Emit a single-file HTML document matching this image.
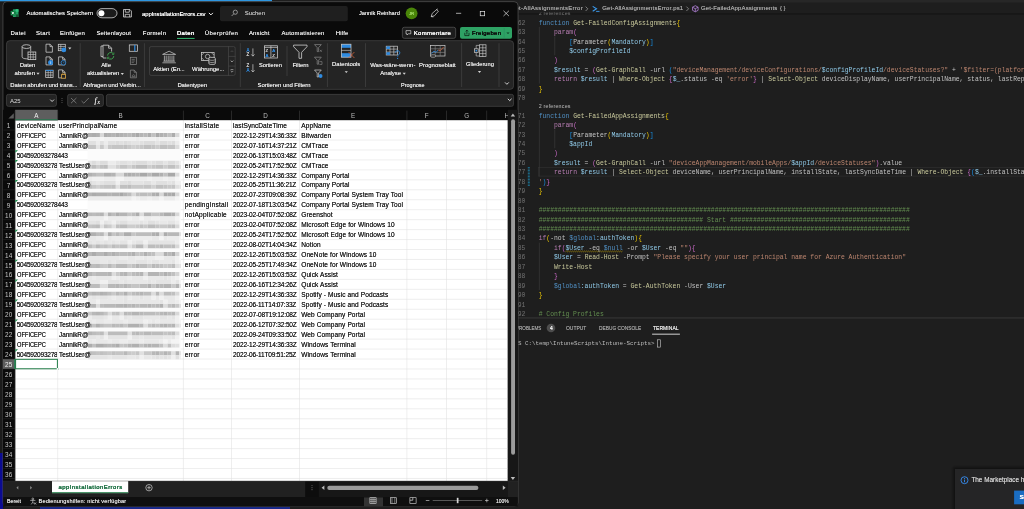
<!DOCTYPE html>
<html lang="de"><head><meta charset="utf-8"><title>appInstallationErrors.csv - Excel</title>
<style>
html,body{margin:0;padding:0}
body{width:1024px;height:509px;overflow:hidden;background:#1e1e1e;position:relative;font-family:"Liberation Sans",sans-serif}
.L{position:absolute;left:0;top:0;width:1024px;height:509px;overflow:hidden;will-change:transform}
.L>svg{position:absolute;left:0;top:0}
.t{position:absolute;white-space:pre;line-height:12px;height:12px;text-shadow:0 0 0.45px}
.m{font-family:"Liberation Mono",monospace;text-shadow:none;opacity:.9}
</style></head><body>
<div class="L" id="vscode">
<svg width="1024" height="509" viewBox="0 0 1024 509">
<rect x="0" y="0" width="1024" height="509" fill="#1e1e1e"/>
<rect x="630" y="0" width="394" height="2.6" fill="#272727"/>
<path d="M585.6 6.6 L587.8 8.8 L585.6 11" fill="none" stroke="#a3a3a3" stroke-width="0.7"/>
<svg x="591.5" y="5.2" width="9" height="7" viewBox="0 0 9 7" overflow="visible"><path d="M1.2 1.2 L5 3.6 L1.2 6" fill="none" stroke="#3b9cf0" stroke-width="1.1"/><path d="M4.6 6.2 H8" stroke="#3b9cf0" stroke-width="0.9"/></svg>
<path d="M686.4 6.6 L688.6 8.8 L686.4 11" fill="none" stroke="#a3a3a3" stroke-width="0.7"/>
<svg x="691.6" y="5" width="7.4" height="7.4" viewBox="0 0 7.4 7.4" overflow="visible"><path d="M3.7 0.7 L6.5 2.2 V5.3 L3.7 6.8 L0.9 5.3 V2.2 Z M0.9 2.2 L3.7 3.7 L6.5 2.2 M3.7 3.7 V6.8" fill="none" stroke="#b180d7" stroke-width="0.8"/></svg>
<rect x="518" y="13.4" width="506" height="0.8" fill="#101010" opacity="0.7"/>
<rect x="518" y="14.2" width="506" height="0.8" fill="#101010" opacity="0.3"/>
<rect x="538.5" y="167.46" width="489.4" height="8.6" stroke="#323232" stroke-width="0.6" fill="none"/>
<rect x="538.9" y="26.92" width="0.55" height="56.64" fill="#414141"/>
<rect x="554.6" y="36.36" width="0.55" height="18.88" fill="#414141"/>
<rect x="538.9" y="119.92" width="0.55" height="56.66" fill="#414141"/>
<rect x="554.6" y="129.37" width="0.55" height="18.88" fill="#414141"/>
<rect x="538.9" y="242.68" width="0.55" height="47.21" fill="#414141"/>
<rect x="527.8" y="167.16" width="2" height="0.75" fill="#1b81a8"/>
<rect x="527.8" y="168.66" width="2" height="0.75" fill="#1b81a8"/>
<rect x="527.8" y="170.16" width="2" height="0.75" fill="#1b81a8"/>
<rect x="527.8" y="171.66" width="2" height="0.75" fill="#1b81a8"/>
<rect x="527.8" y="173.16" width="2" height="0.75" fill="#1b81a8"/>
<rect x="527.8" y="174.66" width="2" height="0.75" fill="#1b81a8"/>
<rect x="527.8" y="176.16" width="2" height="0.75" fill="#1b81a8"/>
<rect x="527.8" y="177.66" width="2" height="0.75" fill="#1b81a8"/>
<rect x="527.8" y="179.16" width="2" height="0.75" fill="#1b81a8"/>
<rect x="527.8" y="180.66" width="2" height="0.75" fill="#1b81a8"/>
<rect x="527.8" y="182.16" width="2" height="0.75" fill="#1b81a8"/>
<rect x="527.8" y="183.66" width="2" height="0.75" fill="#1b81a8"/>
<rect x="527.8" y="185.16" width="2" height="0.75" fill="#1b81a8"/>
<path d="M565.50 251.80 L566.50 251.00 L567.50 251.80 L568.50 251.00 L569.50 251.80 L570.50 251.00 L571.50 251.80 L572.50 251.00 L573.50 251.80 L574.50 251.00 L575.50 251.80 L576.50 251.00 L577.50 251.80 L578.50 251.00 L579.50 251.80 L580.50 251.00 L581.50 251.80 L582.50 251.00 L583.50 251.80 L584.50 251.00 L585.50 251.80 L586.50 251.00 L587.50 251.80 L588.50 251.00 L589.50 251.80 L590.50 251.00 L591.50 251.80 L592.50 251.00 L593.50 251.80 L594.50 251.00 L595.50 251.80 L596.50 251.00 L597.50 251.80 L598.50 251.00 L599.50 251.80 L600.50 251.00 L601.50 251.80 L602.50 251.00 L603.50 251.80 L604.50 251.00 L605.50 251.80 L606.50 251.00 L607.50 251.80 L608.50 251.00 L609.50 251.80 L610.50 251.00 L611.50 251.80 L612.50 251.00 L613.50 251.80 L614.50 251.00 L615.50 251.80 L616.50 251.00 L617.50 251.80 L618.50 251.00 L619.50 251.80 L620.50 251.00 L621.50 251.80 L622.50 251.00" fill="none" stroke="#cca700" stroke-width="0.55"/>
<rect x="518" y="317.5" width="506" height="0.9" fill="#3a3a3a"/>
<rect x="546.7" y="323.7" width="8.6" height="8.6" fill="#4d4d4d" rx="4.3"/>
<rect x="652.1" y="333.7" width="27.8" height="0.9" fill="#e7e7e7"/>
<rect x="657.3" y="339.8" width="3.3" height="7.3" stroke="#cccccc" stroke-width="0.6" fill="none"/>
<rect x="951" y="465" width="84" height="54" fill="#000000" rx="5" opacity="0.06"/>
<rect x="952" y="466" width="83" height="53" fill="#000000" rx="4" opacity="0.08"/>
<rect x="953" y="467" width="82" height="52" fill="#000000" rx="3" opacity="0.1"/>
<rect x="954" y="468" width="81" height="51" fill="#000000" rx="2" opacity="0.14"/>
<rect x="955" y="469" width="80" height="50" fill="#252526"/>
<svg x="960.4" y="476.1" width="8.2" height="8.2" viewBox="0 0 8.2 8.2" overflow="visible"><circle cx="4.1" cy="4.1" r="3.5" fill="none" stroke="#3794ff" stroke-width="0.85"/><path d="M4.1 3.5V6.1" stroke="#3794ff" stroke-width="0.85"/><circle cx="4.1" cy="2.4" r="0.5" fill="#3794ff"/></svg>
<rect x="1014.1" y="490.6" width="14" height="13.7" fill="#1a6dc2"/>
</svg>
<span class="t" style="left:510.5px;top:2px;font-size:6px;color:#a3a3a3;letter-spacing:0.28px;">Get-AllAssignmentsError</span>
<span class="t" style="left:602.2px;top:2px;font-size:6px;color:#a3a3a3;letter-spacing:0.15px;">Get-AllAssignmentsError.ps1</span>
<span class="t" style="left:701px;top:2px;font-size:6px;color:#a3a3a3;letter-spacing:0.14px;">Get-FailedAppAssignments</span>
<span class="t" style="left:779.8px;top:2px;font-size:6px;color:#a3a3a3;transform:scaleX(0.95);transform-origin:0 50%;">{ }</span>
<span class="t" style="left:538.7px;top:7px;font-size:5.3px;color:#5d5d5d;letter-spacing:0.21px;clip-path:inset(5.6px 0 0 0);">2 references</span>
<span class="t m" style="left:505.3px;width:20px;text-align:right;top:18px;font-size:6.38px;color:#7b7b7b;text-shadow:none">62</span>
<span class="t m" style="left:538.7px;top:18px;font-size:6.38px"><span style="color:#569cd6">function</span><span style="color:#d4d4d4"> </span><span style="color:#dcdcaa">Get-FailedConfigAssignments</span><span style="color:#ffd700">{</span></span>
<span class="t m" style="left:505.3px;width:20px;text-align:right;top:27px;font-size:6.38px;color:#7b7b7b;text-shadow:none">63</span>
<span class="t m" style="left:538.7px;top:27px;font-size:6.38px"><span style="color:#d4d4d4">    </span><span style="color:#c586c0">param</span><span style="color:#da70d6">(</span></span>
<span class="t m" style="left:505.3px;width:20px;text-align:right;top:37px;font-size:6.38px;color:#7b7b7b;text-shadow:none">64</span>
<span class="t m" style="left:538.7px;top:37px;font-size:6.38px"><span style="color:#d4d4d4">        </span><span style="color:#179fff">[</span><span style="color:#d4d4d4">Parameter</span><span style="color:#ffd700">(</span><span style="color:#9cdcfe">Mandatory</span><span style="color:#ffd700">)</span><span style="color:#179fff">]</span></span>
<span class="t m" style="left:505.3px;width:20px;text-align:right;top:46px;font-size:6.38px;color:#7b7b7b;text-shadow:none">65</span>
<span class="t m" style="left:538.7px;top:46px;font-size:6.38px"><span style="color:#d4d4d4">        </span><span style="color:#9cdcfe">$configProfileId</span></span>
<span class="t m" style="left:505.3px;width:20px;text-align:right;top:55px;font-size:6.38px;color:#7b7b7b;text-shadow:none">66</span>
<span class="t m" style="left:538.7px;top:55px;font-size:6.38px"><span style="color:#d4d4d4">    </span><span style="color:#da70d6">)</span></span>
<span class="t m" style="left:505.3px;width:20px;text-align:right;top:65px;font-size:6.38px;color:#7b7b7b;text-shadow:none">67</span>
<span class="t m" style="left:538.7px;top:65px;font-size:6.38px"><span style="color:#d4d4d4">    </span><span style="color:#9cdcfe">$result</span><span style="color:#d4d4d4"> = </span><span style="color:#da70d6">(</span><span style="color:#dcdcaa">Get-GraphCall</span><span style="color:#d4d4d4"> -url </span><span style="color:#179fff">(</span><span style="color:#ce9178">"deviceManagement/deviceConfigurations/</span><span style="color:#9cdcfe">$configProfileId</span><span style="color:#ce9178">/deviceStatuses?"</span><span style="color:#d4d4d4"> + </span><span style="color:#ce9178">'$filter=(platform eq 'android') or (platform eq 'ios')</span></span>
<span class="t m" style="left:505.3px;width:20px;text-align:right;top:74px;font-size:6.38px;color:#7b7b7b;text-shadow:none">68</span>
<span class="t m" style="left:538.7px;top:74px;font-size:6.38px"><span style="color:#d4d4d4">    </span><span style="color:#c586c0">return</span><span style="color:#d4d4d4"> </span><span style="color:#9cdcfe">$result</span><span style="color:#d4d4d4"> | </span><span style="color:#dcdcaa">Where-Object</span><span style="color:#d4d4d4"> </span><span style="color:#da70d6">{</span><span style="color:#9cdcfe">$_</span><span style="color:#d4d4d4">.status -eq </span><span style="color:#ce9178">'error'</span><span style="color:#da70d6">}</span><span style="color:#d4d4d4"> | </span><span style="color:#dcdcaa">Select-Object</span><span style="color:#d4d4d4"> deviceDisplayName, userPrincipalName, status, lastReportedDateTime</span></span>
<span class="t m" style="left:505.3px;width:20px;text-align:right;top:84px;font-size:6.38px;color:#7b7b7b;text-shadow:none">69</span>
<span class="t m" style="left:538.7px;top:84px;font-size:6.38px"><span style="color:#ffd700">}</span></span>
<span class="t m" style="left:505.3px;width:20px;text-align:right;top:93px;font-size:6.38px;color:#7b7b7b;text-shadow:none">70</span>
<span class="t m" style="left:505.3px;width:20px;text-align:right;top:111px;font-size:6.38px;color:#7b7b7b;text-shadow:none">71</span>
<span class="t m" style="left:538.7px;top:111px;font-size:6.38px"><span style="color:#569cd6">function</span><span style="color:#d4d4d4"> </span><span style="color:#dcdcaa">Get-FailedAppAssignments</span><span style="color:#ffd700">{</span></span>
<span class="t m" style="left:505.3px;width:20px;text-align:right;top:120px;font-size:6.38px;color:#7b7b7b;text-shadow:none">72</span>
<span class="t m" style="left:538.7px;top:120px;font-size:6.38px"><span style="color:#d4d4d4">    </span><span style="color:#c586c0">param</span><span style="color:#da70d6">(</span></span>
<span class="t m" style="left:505.3px;width:20px;text-align:right;top:130px;font-size:6.38px;color:#7b7b7b;text-shadow:none">73</span>
<span class="t m" style="left:538.7px;top:130px;font-size:6.38px"><span style="color:#d4d4d4">        </span><span style="color:#179fff">[</span><span style="color:#d4d4d4">Parameter</span><span style="color:#ffd700">(</span><span style="color:#9cdcfe">Mandatory</span><span style="color:#ffd700">)</span><span style="color:#179fff">]</span></span>
<span class="t m" style="left:505.3px;width:20px;text-align:right;top:139px;font-size:6.38px;color:#7b7b7b;text-shadow:none">74</span>
<span class="t m" style="left:538.7px;top:139px;font-size:6.38px"><span style="color:#d4d4d4">        </span><span style="color:#9cdcfe">$appId</span></span>
<span class="t m" style="left:505.3px;width:20px;text-align:right;top:148px;font-size:6.38px;color:#7b7b7b;text-shadow:none">75</span>
<span class="t m" style="left:538.7px;top:148px;font-size:6.38px"><span style="color:#d4d4d4">    </span><span style="color:#da70d6">)</span></span>
<span class="t m" style="left:505.3px;width:20px;text-align:right;top:158px;font-size:6.38px;color:#7b7b7b;text-shadow:none">76</span>
<span class="t m" style="left:538.7px;top:158px;font-size:6.38px"><span style="color:#d4d4d4">    </span><span style="color:#9cdcfe">$result</span><span style="color:#d4d4d4"> = </span><span style="color:#da70d6">(</span><span style="color:#dcdcaa">Get-GraphCall</span><span style="color:#d4d4d4"> -url </span><span style="color:#ce9178">"deviceAppManagement/mobileApps/</span><span style="color:#9cdcfe">$appId</span><span style="color:#ce9178">/deviceStatuses"</span><span style="color:#da70d6">)</span><span style="color:#d4d4d4">.value</span></span>
<span class="t m" style="left:505.3px;width:20px;text-align:right;top:167px;font-size:6.38px;color:#7b7b7b;text-shadow:none">77</span>
<span class="t m" style="left:538.7px;top:167px;font-size:6.38px"><span style="color:#d4d4d4">    </span><span style="color:#c586c0">return</span><span style="color:#d4d4d4"> </span><span style="color:#9cdcfe">$result</span><span style="color:#d4d4d4"> | </span><span style="color:#dcdcaa">Select-Object</span><span style="color:#d4d4d4"> deviceName, userPrincipalName, installState, lastSyncDateTime | </span><span style="color:#dcdcaa">Where-Object</span><span style="color:#d4d4d4"> </span><span style="color:#da70d6">{</span><span style="color:#179fff">(</span><span style="color:#9cdcfe">$_</span><span style="color:#d4d4d4">.installState -ne </span><span style="color:#ce9178">'installed</span></span>
<span class="t m" style="left:505.3px;width:20px;text-align:right;top:177px;font-size:6.38px;color:#7b7b7b;text-shadow:none">78</span>
<span class="t m" style="left:538.7px;top:177px;font-size:6.38px"><span style="color:#ce9178">'</span><span style="color:#179fff">)</span><span style="color:#da70d6">}</span></span>
<span class="t m" style="left:505.3px;width:20px;text-align:right;top:186px;font-size:6.38px;color:#7b7b7b;text-shadow:none">79</span>
<span class="t m" style="left:538.7px;top:186px;font-size:6.38px"><span style="color:#ffd700">}</span></span>
<span class="t m" style="left:505.3px;width:20px;text-align:right;top:196px;font-size:6.38px;color:#7b7b7b;text-shadow:none">80</span>
<span class="t m" style="left:505.3px;width:20px;text-align:right;top:205px;font-size:6.38px;color:#7b7b7b;text-shadow:none">81</span>
<span class="t m" style="left:538.7px;top:205px;font-size:6.38px"><span style="color:#6a9955">#################################################################################################</span></span>
<span class="t m" style="left:505.3px;width:20px;text-align:right;top:215px;font-size:6.38px;color:#7b7b7b;text-shadow:none">82</span>
<span class="t m" style="left:538.7px;top:215px;font-size:6.38px"><span style="color:#6a9955">########################################### Start ###############################################</span></span>
<span class="t m" style="left:505.3px;width:20px;text-align:right;top:224px;font-size:6.38px;color:#7b7b7b;text-shadow:none">83</span>
<span class="t m" style="left:538.7px;top:224px;font-size:6.38px"><span style="color:#6a9955">#################################################################################################</span></span>
<span class="t m" style="left:505.3px;width:20px;text-align:right;top:233px;font-size:6.38px;color:#7b7b7b;text-shadow:none">84</span>
<span class="t m" style="left:538.7px;top:233px;font-size:6.38px"><span style="color:#c586c0">if</span><span style="color:#ffd700">(</span><span style="color:#d4d4d4">-not </span><span style="color:#569cd6">$global</span><span style="color:#9cdcfe">:authToken</span><span style="color:#ffd700">)</span><span style="color:#ffd700">{</span></span>
<span class="t m" style="left:505.3px;width:20px;text-align:right;top:243px;font-size:6.38px;color:#7b7b7b;text-shadow:none">85</span>
<span class="t m" style="left:538.7px;top:243px;font-size:6.38px"><span style="color:#d4d4d4">    </span><span style="color:#c586c0">if</span><span style="color:#da70d6">(</span><span style="color:#9cdcfe">$User</span><span style="color:#d4d4d4"> -eq </span><span style="color:#569cd6">$null</span><span style="color:#d4d4d4"> -or </span><span style="color:#9cdcfe">$User</span><span style="color:#d4d4d4"> -eq </span><span style="color:#ce9178">""</span><span style="color:#da70d6">)</span><span style="color:#da70d6">{</span></span>
<span class="t m" style="left:505.3px;width:20px;text-align:right;top:252px;font-size:6.38px;color:#7b7b7b;text-shadow:none">86</span>
<span class="t m" style="left:538.7px;top:252px;font-size:6.38px"><span style="color:#d4d4d4">    </span><span style="color:#9cdcfe">$User</span><span style="color:#d4d4d4"> = </span><span style="color:#dcdcaa">Read-Host</span><span style="color:#d4d4d4"> -Prompt </span><span style="color:#ce9178">"Please specify your user principal name for Azure Authentication"</span></span>
<span class="t m" style="left:505.3px;width:20px;text-align:right;top:262px;font-size:6.38px;color:#7b7b7b;text-shadow:none">87</span>
<span class="t m" style="left:538.7px;top:262px;font-size:6.38px"><span style="color:#d4d4d4">    </span><span style="color:#dcdcaa">Write-Host</span></span>
<span class="t m" style="left:505.3px;width:20px;text-align:right;top:271px;font-size:6.38px;color:#7b7b7b;text-shadow:none">88</span>
<span class="t m" style="left:538.7px;top:271px;font-size:6.38px"><span style="color:#d4d4d4">    </span><span style="color:#da70d6">}</span></span>
<span class="t m" style="left:505.3px;width:20px;text-align:right;top:281px;font-size:6.38px;color:#7b7b7b;text-shadow:none">89</span>
<span class="t m" style="left:538.7px;top:281px;font-size:6.38px"><span style="color:#d4d4d4">    </span><span style="color:#569cd6">$global</span><span style="color:#9cdcfe">:authToken</span><span style="color:#d4d4d4"> = </span><span style="color:#dcdcaa">Get-AuthToken</span><span style="color:#d4d4d4"> -User </span><span style="color:#9cdcfe">$User</span></span>
<span class="t m" style="left:505.3px;width:20px;text-align:right;top:290px;font-size:6.38px;color:#7b7b7b;text-shadow:none">90</span>
<span class="t m" style="left:538.7px;top:290px;font-size:6.38px"><span style="color:#ffd700">}</span></span>
<span class="t m" style="left:505.3px;width:20px;text-align:right;top:300px;font-size:6.38px;color:#7b7b7b;text-shadow:none">91</span>
<span class="t m" style="left:505.3px;width:20px;text-align:right;top:309px;font-size:6.38px;color:#7b7b7b;text-shadow:none">92</span>
<span class="t m" style="left:538.7px;top:309px;font-size:6.38px"><span style="color:#6a9955"># Config Profiles</span></span>
<span class="t" style="left:538.7px;top:100px;font-size:5.3px;color:#8f8f8f;letter-spacing:0.21px;">2 references</span>
<span class="t" style="left:515.66px;top:322px;font-size:5.45px;color:#9d9d9d;transform:scaleX(0.84);transform-origin:0 50%;">PROBLEMS</span>
<span class="t" style="left:549.6px;top:322px;font-size:5.3px;color:#ffffff;transform:scaleX(0.95);transform-origin:0 50%;">4</span>
<span class="t" style="left:566.3px;top:322px;font-size:5.45px;color:#9d9d9d;transform:scaleX(0.91);transform-origin:0 50%;">OUTPUT</span>
<span class="t" style="left:598.8px;top:322px;font-size:5.45px;color:#9d9d9d;transform:scaleX(0.89);transform-origin:0 50%;">DEBUG CONSOLE</span>
<span class="t" style="left:653.3px;top:322px;font-size:5.45px;color:#e7e7e7;transform:scaleX(0.93);transform-origin:0 50%;">TERMINAL</span>
<span class="t m" style="left:514.5px;top:338px;font-size:5.83px;color:#cccccc">PS C:\temp\IntuneScripts\Intune-Scripts&gt; </span>
<span class="t" style="left:971.4px;top:474px;font-size:6.4px;color:#cccccc;">The Marketplace has extensions that can help</span>
<span class="t" style="left:1019.4px;top:491px;font-size:6.2px;color:#ffffff;-webkit-text-stroke:0.22px;">Search Marketplace</span>
</div>
<div class="L" id="excel">
<svg width="1024" height="509" viewBox="0 0 1024 509">
<rect x="0" y="0" width="4" height="509" fill="#1b1b1b"/>
<rect x="0" y="0" width="272" height="1.3" fill="#2e97e2"/>
<rect x="40" y="506.4" width="250" height="3" fill="#18288a"/>
<rect x="0" y="453" width="3" height="56" fill="#0b0b92"/>
<rect x="2.95" y="1.65" width="515.1" height="504.9" stroke="#565656" stroke-width="0.7" fill="#0a0a0a" rx="4"/>
<svg x="10.3" y="8.8" width="8.6" height="8.6" viewBox="0 0 8.6 8.6" overflow="visible"><rect x="2.6" y="0.4" width="5.6" height="7.8" rx="0.6" fill="#21a366"/><rect x="5.4" y="0.4" width="2.8" height="2.6" fill="#33c481"/><rect x="5.4" y="5.6" width="2.8" height="2.6" fill="#185c37"/><rect x="2.6" y="3" width="2.8" height="2.6" fill="#107c41"/><rect x="0.3" y="2" width="4.6" height="4.6" rx="0.5" fill="#107c41"/><path d="M1.6 3.1 L3.6 5.5 M3.6 3.1 L1.6 5.5" stroke="#fff" stroke-width="0.8"/></svg>
<rect x="97" y="8.6" width="20" height="9.2" stroke="#d0d0d0" stroke-width="0.8" fill="#1b1b1b" rx="5"/>
<circle cx="101.4" cy="13.2" r="3.0" fill="#ffffff"/>
<svg x="123" y="9" width="9" height="8.6" viewBox="0 0 9 8.6" overflow="visible"><path d="M0.5 0.5 H6.9 L8.4 2 V8 H0.5 Z" fill="none" stroke="#d6d6d6" stroke-width="0.8"/><path d="M2.3 0.6 V3.2 H6.3 V0.6 M2.2 8 V5.3 H6.7 V8" fill="none" stroke="#d6d6d6" stroke-width="0.8"/></svg>
<path d="M208.9 12.9 L210.9 14.9 L212.9 12.9" fill="none" stroke="#f4f4f4" stroke-width="1.0"/>
<rect x="220" y="6" width="127.8" height="15.2" fill="#1f1f1f" rx="2"/>
<circle cx="235.3" cy="12.2" r="2.1" fill="none" stroke="#bdbdbd" stroke-width="0.7"/><path d="M233.8 13.8 L231.6 16" stroke="#bdbdbd" stroke-width="0.7"/>
<circle cx="411.6" cy="13.3" r="5.9" fill="#4a8509"/>
<path d="M431.2 16.6 L432.2 13.4 L436.6 9.6 L438.4 11.2 L434.4 15.8 Z M431.2 16.6 L433.4 16.9 M436.2 9.9 L437.8 8.9" fill="none" stroke="#dedede" stroke-width="0.7"/>
<path d="M456 13.3 H461.2" stroke="#e6e6e6" stroke-width="0.7"/>
<rect x="480.25" y="11.45" width="4.4" height="4.3" stroke="#e6e6e6" stroke-width="0.7" fill="none"/>
<path d="M503.5 10.8 L508.9 16 M508.9 10.8 L503.5 16" stroke="#e6e6e6" stroke-width="0.7"/>
<rect x="177" y="37.9" width="17.6" height="1.1" fill="#2fa866"/>
<rect x="402.35" y="27.25" width="53.3" height="11.1" stroke="#5a5a5a" stroke-width="0.7" fill="#1c1c1c" rx="2"/>
<path d="M406 30.6 H410.8 V33.8 H408.2 L407 35 V33.8 H406 Z" fill="none" stroke="#e0e0e0" stroke-width="0.65"/>
<rect x="460" y="26.9" width="52" height="11.8" fill="#2ea264" rx="2"/>
<path d="M464.8 32.8 V35.6 H469 V32.8 M466.9 34.4 V30.2 M465.6 31.4 L466.9 30.1 L468.2 31.4" fill="none" stroke="#0a0a0a" stroke-width="0.65"/>
<path d="M506.4 32.4 L508 34 L509.6 32.4 Z" fill="#103a25"/>
<line x1="504.2" y1="28" x2="504.2" y2="37.6" stroke="#25895a" stroke-width="0.5" />
<rect x="6.45" y="40.65" width="507.1" height="48.7" stroke="#474747" stroke-width="0.7" fill="#242424" rx="3.4"/>
<line x1="80.2" y1="43.2" x2="80.2" y2="87" stroke="#4a4a4a" stroke-width="0.6" />
<line x1="144.4" y1="43.2" x2="144.4" y2="87" stroke="#4a4a4a" stroke-width="0.6" />
<line x1="240.3" y1="43.2" x2="240.3" y2="87" stroke="#4a4a4a" stroke-width="0.6" />
<line x1="327.4" y1="43.2" x2="327.4" y2="87" stroke="#4a4a4a" stroke-width="0.6" />
<line x1="365.5" y1="43.2" x2="365.5" y2="87" stroke="#4a4a4a" stroke-width="0.6" />
<line x1="461.6" y1="43.2" x2="461.6" y2="87" stroke="#4a4a4a" stroke-width="0.6" />
<line x1="499" y1="43.2" x2="499" y2="87" stroke="#4a4a4a" stroke-width="0.6" />
<line x1="287" y1="46" x2="287" y2="76" stroke="#4a4a4a" stroke-width="0.6" />
<svg x="21.4" y="44.2" width="15" height="16.2" viewBox="0 0 15 16.2" overflow="visible"><ellipse cx="5" cy="2.4" rx="4.3" ry="1.9" fill="none" stroke="#d0d0d0" stroke-width="0.8"/><path d="M0.7 2.4 V12.6 C0.7 14 3 14.6 5 14.6 H6.4 M9.3 2.4 V7.2" fill="none" stroke="#d0d0d0" stroke-width="0.8"/><rect x="6.6" y="7.8" width="7.8" height="7.6" fill="#242424" stroke="#d0d0d0" stroke-width="0.8"/><path d="M6.6 10.3 H14.4 M6.6 12.8 H14.4 M9.2 7.8 V15.4 M11.8 7.8 V15.4" stroke="#d0d0d0" stroke-width="0.6"/></svg>
<path d="M36.4 72.8 L39.6 72.8 L38 74.72 Z" fill="#d4d4d4"/>
<svg x="45.4" y="43.7" width="8" height="9" viewBox="0 0 8 9" overflow="visible"><path d="M0.6 0.5 H4.6 L7 2.9 V8.5 H0.6 Z M4.6 0.5 V2.9 H7" fill="none" stroke="#d0d0d0" stroke-width="0.75"/></svg>
<svg x="45.4" y="56.4" width="8" height="9" viewBox="0 0 8 9" overflow="visible"><path d="M0.6 0.5 H4.6 L7 2.9 V8.5 H0.6 Z M4.6 0.5 V2.9 H7" fill="none" stroke="#d0d0d0" stroke-width="0.75"/><circle cx="5.2" cy="6.2" r="2.5" fill="#2f8be0"/><path d="M5.2 5 V7.6" stroke="#fff" stroke-width="0.5"/></svg>
<svg x="45.2" y="69.6" width="8.4" height="8.6" viewBox="0 0 8.4 8.6" overflow="visible"><rect x="0.5" y="0.6" width="7.4" height="7.4" fill="none" stroke="#d0d0d0" stroke-width="0.75"/><path d="M0.5 3 H7.9 M0.5 5.5 H7.9 M3 0.6 V8 M5.5 0.6 V8" stroke="#d0d0d0" stroke-width="0.6"/><path d="M0.5 1 H7.9" stroke="#2f8be0" stroke-width="1"/></svg>
<svg x="57.8" y="43.7" width="9" height="9" viewBox="0 0 9 9" overflow="visible"><rect x="0.5" y="0.6" width="7" height="6.4" fill="none" stroke="#d0d0d0" stroke-width="0.75"/><path d="M0.5 2.8 H7.5 M0.5 5 H7.5 M3 0.6 V7" stroke="#d0d0d0" stroke-width="0.6"/><circle cx="6" cy="6.2" r="2.4" fill="#2f8be0"/></svg>
<path d="M68.2 47.6 L71.4 47.6 L69.8 49.52 Z" fill="#d4d4d4"/>
<svg x="58" y="56.4" width="8" height="9" viewBox="0 0 8 9" overflow="visible"><path d="M0.6 0.5 H4.6 L7 2.9 V8.5 H0.6 Z M4.6 0.5 V2.9 H7" fill="none" stroke="#d0d0d0" stroke-width="0.75"/><circle cx="5.4" cy="6.3" r="2.3" fill="#242424" stroke="#2f8be0" stroke-width="0.8"/><path d="M5.4 5.2 V6.4 H6.4" fill="none" stroke="#2f8be0" stroke-width="0.5"/></svg>
<svg x="58" y="69.4" width="8" height="9" viewBox="0 0 8 9" overflow="visible"><path d="M0.6 0.5 H4.6 L7 2.9 V8.5 H0.6 Z M4.6 0.5 V2.9 H7" fill="none" stroke="#d0d0d0" stroke-width="0.75"/><rect x="3.4" y="5.2" width="4.2" height="3.6" fill="#242424" stroke="#d9a441" stroke-width="0.8"/><path d="M4.3 5.2 V4.3 C4.3 3.2 6.7 3.2 6.7 4.3 V5.2" fill="none" stroke="#d9a441" stroke-width="0.6"/></svg>
<svg x="100" y="44.6" width="15" height="15.6" viewBox="0 0 15 15.6" overflow="visible"><path d="M3 1.4 H1 V12 H3" fill="none" stroke="#d0d0d0" stroke-width="0.8"/><path d="M3 0.6 H8.6 L11.6 3.6 V7 M3 0.6 V13.4 H6.4 M8.6 0.6 V3.6 H11.6" fill="none" stroke="#d0d0d0" stroke-width="0.8"/><path d="M7.6 11 A3.2 3.2 0 0 1 13.4 9.2 M13.8 11.4 A3.2 3.2 0 0 1 8 13.2" fill="none" stroke="#3ea84f" stroke-width="0.9"/><path d="M13.9 7.8 V9.8 H12 M7.5 14.6 V12.6 H9.4" fill="none" stroke="#3ea84f" stroke-width="0.7"/></svg>
<path d="M120.7 73 L123.9 73 L122.3 74.92 Z" fill="#d4d4d4"/>
<svg x="128.8" y="44.4" width="9.2" height="7.6" viewBox="0 0 9.2 7.6" overflow="visible"><rect x="0.5" y="0.5" width="8.2" height="6.4" fill="none" stroke="#d0d0d0" stroke-width="0.75"/><path d="M6 0.5 V6.9" stroke="#2f8be0" stroke-width="1.2"/></svg>
<svg x="129.8" y="56.8" width="7.4" height="8.4" viewBox="0 0 7.4 8.4" overflow="visible"><rect x="0.5" y="0.5" width="6.2" height="7.2" fill="none" stroke="#8a8a8a" stroke-width="0.7"/><path d="M1.8 2.6 H5 M1.8 4.2 H5 M1.8 5.8 H4" stroke="#8a8a8a" stroke-width="0.6"/></svg>
<svg x="129.8" y="69.6" width="7.6" height="8.8" viewBox="0 0 7.6 8.8" overflow="visible"><path d="M0.6 0.5 H4.4 L6.6 2.7 V8.2 H0.6 Z M4.4 0.5 V2.7 H6.6" fill="none" stroke="#8a8a8a" stroke-width="0.7"/><path d="M2.4 6.6 C2.4 4.6 5 4.6 5 6.6 M2 7 H5.6" fill="none" stroke="#8a8a8a" stroke-width="0.6"/></svg>
<rect x="149.5" y="46.6" width="85.7" height="28.8" stroke="#4d4d4d" stroke-width="0.6" fill="none" rx="1.6"/>
<line x1="228.5" y1="46.3" x2="228.5" y2="75.7" stroke="#4d4d4d" stroke-width="0.6" />
<line x1="228.5" y1="56.4" x2="235.5" y2="56.4" stroke="#4d4d4d" stroke-width="0.6" />
<line x1="228.5" y1="66.1" x2="235.5" y2="66.1" stroke="#4d4d4d" stroke-width="0.6" />
<path d="M230.7 52 L232 50.7 L233.3 52" fill="none" stroke="#5a5a5a" stroke-width="0.6"/>
<path d="M230.7 60.6 L232 61.9 L233.3 60.6" fill="none" stroke="#d0d0d0" stroke-width="0.7"/>
<path d="M230.6 69.6 H233.4 M230.7 70.9 L232 72.2 L233.3 70.9" fill="none" stroke="#d0d0d0" stroke-width="0.6"/>
<svg x="161.8" y="50.6" width="14.6" height="12.8" viewBox="0 0 14.6 12.8" overflow="visible"><path d="M0.8 3.8 L7.3 0.6 L13.8 3.8 Z M0.6 12.2 H14 M1.6 10.6 H13 M2.6 5 V10.4 M4.4 5 V10.4 M6.4 5 V10.4 M8.2 5 V10.4 M10.2 5 V10.4 M12 5 V10.4" fill="none" stroke="#d0d0d0" stroke-width="0.7"/></svg>
<svg x="201" y="52" width="15" height="13" viewBox="0 0 15 13" overflow="visible"><rect x="0.5" y="0.5" width="12.6" height="8" fill="none" stroke="#d0d0d0" stroke-width="0.75"/><circle cx="6.6" cy="4.5" r="2.2" fill="none" stroke="#d0d0d0" stroke-width="0.7"/><path d="M0.5 2.6 C1.8 2.6 2.6 1.8 2.6 0.5 M13.1 2.6 C11.8 2.6 11 1.8 11 0.5 M0.5 6.4 C1.8 6.4 2.6 7.2 2.6 8.5" fill="none" stroke="#d0d0d0" stroke-width="0.6"/><rect x="7.8" y="5.4" width="6.6" height="7" rx="1.4" fill="#242424" stroke="#d0d0d0" stroke-width="0.75"/><path d="M7.8 7.6 C9.4 8.6 12.8 8.6 14.4 7.6 M7.8 9.8 C9.4 10.8 12.8 10.8 14.4 9.8" fill="none" stroke="#d0d0d0" stroke-width="0.6"/></svg>
<path d="M252.9 48.4 V56 M251.3 54.4 L252.9 56.2 L254.5 54.4" fill="none" stroke="#d0d0d0" stroke-width="0.7"/>
<path d="M252.9 64.2 V71.8 M251.3 70.2 L252.9 72 L254.5 70.2" fill="none" stroke="#d0d0d0" stroke-width="0.7"/>
<svg x="263.9" y="45" width="14.2" height="13.6" viewBox="0 0 14.2 13.6" overflow="visible"><rect x="0.5" y="0.8" width="13" height="12.2" fill="none" stroke="#d0d0d0" stroke-width="0.75"/><path d="M7 0.8 V13 M0.5 2.4 H13.5" stroke="#d0d0d0" stroke-width="0.7"/></svg>
<svg x="293" y="44.3" width="14.6" height="15" viewBox="0 0 14.6 15" overflow="visible"><path d="M0.6 0.8 H14 V2.4 L8.6 8 V14 H6 V8 L0.6 2.4 Z" fill="none" stroke="#d0d0d0" stroke-width="0.8"/></svg>
<svg x="314" y="44" width="9" height="9" viewBox="0 0 9 9" overflow="visible"><path d="M0.5 0.6 H7.3 L4.6 3.6 V7.6 H3.2 V3.6 Z" fill="none" stroke="#8a8a8a" stroke-width="0.7"/><path d="M5.8 5.8 L7.8 7.8 M7.8 5.8 L5.8 7.8" stroke="#8a8a8a" stroke-width="0.6"/></svg>
<svg x="314" y="56.6" width="9" height="9" viewBox="0 0 9 9" overflow="visible"><path d="M0.5 0.6 H7.3 L4.6 3.6 V7.6 H3.2 V3.6 Z" fill="none" stroke="#8a8a8a" stroke-width="0.7"/><path d="M5.4 5 H8 V7.8 H5.4" fill="none" stroke="#8a8a8a" stroke-width="0.6"/></svg>
<svg x="314" y="69.4" width="9" height="9" viewBox="0 0 9 9" overflow="visible"><path d="M0.5 0.6 H7.3 L4.6 3.6 V7.6 H3.2 V3.6 Z" fill="none" stroke="#d0d0d0" stroke-width="0.7"/><circle cx="6.6" cy="6.6" r="1.9" fill="#2f8be0"/></svg>
<svg x="341" y="43.6" width="14" height="15" viewBox="0 0 14 15" overflow="visible"><rect x="0.4" y="0.6" width="9.6" height="3.6" fill="#2f8be0"/><rect x="0.4" y="9.6" width="9.6" height="4" fill="#2f8be0"/><rect x="0.4" y="0.6" width="9.6" height="13" fill="none" stroke="#d0d0d0" stroke-width="0.7"/><path d="M0.4 6.8 H10" stroke="#d0d0d0" stroke-width="0.6"/><path d="M7.6 8.4 L13.4 14.4 M13.4 8.4 L7.6 14.4" stroke="#d0623a" stroke-width="0.8"/></svg>
<path d="M344.7 71.2 L347.9 71.2 L346.3 73.12 Z" fill="#d4d4d4"/>
<svg x="385.8" y="45.6" width="16" height="14" viewBox="0 0 16 14" overflow="visible"><rect x="0.4" y="0.6" width="11.4" height="8.8" fill="none" stroke="#d0d0d0" stroke-width="0.7"/><path d="M0.4 3.5 H11.8 M0.4 6.4 H11.8 M4.2 0.6 V9.4 M8 0.6 V9.4" stroke="#d0d0d0" stroke-width="0.6"/><rect x="0.6" y="0.8" width="3.5" height="2.6" fill="#2f8be0"/><rect x="0.6" y="6.6" width="3.5" height="2.7" fill="#2f8be0"/><path d="M9.6 7 C9.6 4.4 14 4.6 14 7.2 C14 9 11.8 9.2 11.8 11" fill="none" stroke="#2f8be0" stroke-width="0.9"/><circle cx="11.8" cy="12.8" r="0.6" fill="#2f8be0"/></svg>
<path d="M402.6 72.8 L405.8 72.8 L404.2 74.72 Z" fill="#d4d4d4"/>
<svg x="430" y="44.8" width="15.6" height="13" viewBox="0 0 15.6 13" overflow="visible"><rect x="0.4" y="0.6" width="14.6" height="10.6" fill="none" stroke="#d0d0d0" stroke-width="0.7"/><path d="M0.4 4 H15 M0.4 7.6 H15 M5.2 0.6 V11.2 M10.2 0.6 V11.2" stroke="#8a8a8a" stroke-width="0.6"/><path d="M1.4 8.8 L4 6.4 L6 7.6 L8.2 5.2" fill="none" stroke="#2f8be0" stroke-width="0.8"/><path d="M8.2 5.2 L10.4 5.8 L13.6 2.2" fill="none" stroke="#d0623a" stroke-width="0.8"/><rect x="0.8" y="10" width="4.6" height="2.4" rx="0.8" fill="#242424" stroke="#d0d0d0" stroke-width="0.6"/></svg>
<svg x="473.8" y="44.2" width="13" height="13" viewBox="0 0 13 13" overflow="visible"><rect x="5.8" y="0.6" width="6.4" height="11.8" fill="none" stroke="#d0d0d0" stroke-width="0.7"/><path d="M5.8 3.6 H12.2 M5.8 6.5 H12.2 M5.8 9.4 H12.2 M9 0.6 V12.4" stroke="#d0d0d0" stroke-width="0.6"/><path d="M5.6 1.2 H2.4 V4.6 M2.4 8.4 V11.8 H5.6" fill="none" stroke="#d0d0d0" stroke-width="0.6"/><rect x="0.6" y="4.6" width="3.8" height="3.8" fill="#242424" stroke="#d0d0d0" stroke-width="0.7"/><rect x="1.7" y="5.7" width="1.6" height="1.6" fill="#2f8be0"/></svg>
<path d="M477.9 71 L481.1 71 L479.5 72.92 Z" fill="#d4d4d4"/>
<path d="M505 82.4 L506.9 84.3 L508.8 82.4" fill="none" stroke="#e8e8e8" stroke-width="0.9"/>
<rect x="6.45" y="94.35" width="50" height="12" stroke="#474747" stroke-width="0.7" fill="#242424" rx="2"/>
<path d="M50.2 99.6 L52.1 101.5 L54 99.6" fill="none" stroke="#e8e8e8" stroke-width="0.9"/>
<circle cx="62" cy="98.4" r="0.45" fill="#bdbdbd"/>
<circle cx="62" cy="100.4" r="0.45" fill="#bdbdbd"/>
<circle cx="62" cy="102.4" r="0.45" fill="#bdbdbd"/>
<rect x="67.65" y="94.35" width="35.7" height="12" stroke="#474747" stroke-width="0.7" fill="#242424" rx="2"/>
<path d="M71 98 L76.4 103.2 M76.4 98 L71 103.2" stroke="#8c8c8c" stroke-width="0.7"/>
<path d="M81.6 101 L83.8 103.2 L88.8 98" fill="none" stroke="#8c8c8c" stroke-width="0.7"/>
<rect x="106.35" y="94.35" width="407.2" height="12" stroke="#474747" stroke-width="0.7" fill="#242424" rx="2"/>
<path d="M507.8 98.8 L509.7 100.7 L511.6 98.8" fill="none" stroke="#e8e8e8" stroke-width="0.9"/>
<rect x="15.1" y="120.1" width="492.7" height="361.1" fill="#ffffff"/>
<line x1="15.1" y1="130.06" x2="507.8" y2="130.06" stroke="#e0e0e0" stroke-width="0.55" />
<line x1="15.1" y1="140.01" x2="507.8" y2="140.01" stroke="#e0e0e0" stroke-width="0.55" />
<line x1="15.1" y1="149.97" x2="507.8" y2="149.97" stroke="#e0e0e0" stroke-width="0.55" />
<line x1="15.1" y1="159.92" x2="507.8" y2="159.92" stroke="#e0e0e0" stroke-width="0.55" />
<line x1="15.1" y1="169.88" x2="507.8" y2="169.88" stroke="#e0e0e0" stroke-width="0.55" />
<line x1="15.1" y1="179.83" x2="507.8" y2="179.83" stroke="#e0e0e0" stroke-width="0.55" />
<line x1="15.1" y1="189.78" x2="507.8" y2="189.78" stroke="#e0e0e0" stroke-width="0.55" />
<line x1="15.1" y1="199.74" x2="507.8" y2="199.74" stroke="#e0e0e0" stroke-width="0.55" />
<line x1="15.1" y1="209.69" x2="507.8" y2="209.69" stroke="#e0e0e0" stroke-width="0.55" />
<line x1="15.1" y1="219.65" x2="507.8" y2="219.65" stroke="#e0e0e0" stroke-width="0.55" />
<line x1="15.1" y1="229.6" x2="507.8" y2="229.6" stroke="#e0e0e0" stroke-width="0.55" />
<line x1="15.1" y1="239.56" x2="507.8" y2="239.56" stroke="#e0e0e0" stroke-width="0.55" />
<line x1="15.1" y1="249.51" x2="507.8" y2="249.51" stroke="#e0e0e0" stroke-width="0.55" />
<line x1="15.1" y1="259.47" x2="507.8" y2="259.47" stroke="#e0e0e0" stroke-width="0.55" />
<line x1="15.1" y1="269.42" x2="507.8" y2="269.42" stroke="#e0e0e0" stroke-width="0.55" />
<line x1="15.1" y1="279.38" x2="507.8" y2="279.38" stroke="#e0e0e0" stroke-width="0.55" />
<line x1="15.1" y1="289.34" x2="507.8" y2="289.34" stroke="#e0e0e0" stroke-width="0.55" />
<line x1="15.1" y1="299.29" x2="507.8" y2="299.29" stroke="#e0e0e0" stroke-width="0.55" />
<line x1="15.1" y1="309.25" x2="507.8" y2="309.25" stroke="#e0e0e0" stroke-width="0.55" />
<line x1="15.1" y1="319.2" x2="507.8" y2="319.2" stroke="#e0e0e0" stroke-width="0.55" />
<line x1="15.1" y1="329.15" x2="507.8" y2="329.15" stroke="#e0e0e0" stroke-width="0.55" />
<line x1="15.1" y1="339.11" x2="507.8" y2="339.11" stroke="#e0e0e0" stroke-width="0.55" />
<line x1="15.1" y1="349.06" x2="507.8" y2="349.06" stroke="#e0e0e0" stroke-width="0.55" />
<line x1="15.1" y1="359.02" x2="507.8" y2="359.02" stroke="#e0e0e0" stroke-width="0.55" />
<line x1="15.1" y1="368.98" x2="507.8" y2="368.98" stroke="#e0e0e0" stroke-width="0.55" />
<line x1="15.1" y1="378.93" x2="507.8" y2="378.93" stroke="#e0e0e0" stroke-width="0.55" />
<line x1="15.1" y1="388.88" x2="507.8" y2="388.88" stroke="#e0e0e0" stroke-width="0.55" />
<line x1="15.1" y1="398.84" x2="507.8" y2="398.84" stroke="#e0e0e0" stroke-width="0.55" />
<line x1="15.1" y1="408.79" x2="507.8" y2="408.79" stroke="#e0e0e0" stroke-width="0.55" />
<line x1="15.1" y1="418.75" x2="507.8" y2="418.75" stroke="#e0e0e0" stroke-width="0.55" />
<line x1="15.1" y1="428.71" x2="507.8" y2="428.71" stroke="#e0e0e0" stroke-width="0.55" />
<line x1="15.1" y1="438.66" x2="507.8" y2="438.66" stroke="#e0e0e0" stroke-width="0.55" />
<line x1="15.1" y1="448.62" x2="507.8" y2="448.62" stroke="#e0e0e0" stroke-width="0.55" />
<line x1="15.1" y1="458.57" x2="507.8" y2="458.57" stroke="#e0e0e0" stroke-width="0.55" />
<line x1="15.1" y1="468.52" x2="507.8" y2="468.52" stroke="#e0e0e0" stroke-width="0.55" />
<line x1="15.1" y1="478.48" x2="507.8" y2="478.48" stroke="#e0e0e0" stroke-width="0.55" />
<line x1="57.7" y1="120.1" x2="57.7" y2="481.2" stroke="#e0e0e0" stroke-width="0.55" />
<line x1="183.4" y1="120.1" x2="183.4" y2="481.2" stroke="#e0e0e0" stroke-width="0.55" />
<line x1="231.5" y1="120.1" x2="231.5" y2="481.2" stroke="#e0e0e0" stroke-width="0.55" />
<line x1="299.5" y1="120.1" x2="299.5" y2="481.2" stroke="#e0e0e0" stroke-width="0.55" />
<line x1="406.9" y1="120.1" x2="406.9" y2="481.2" stroke="#e0e0e0" stroke-width="0.55" />
<line x1="446.5" y1="120.1" x2="446.5" y2="481.2" stroke="#e0e0e0" stroke-width="0.55" />
<line x1="486.7" y1="120.1" x2="486.7" y2="481.2" stroke="#e0e0e0" stroke-width="0.55" />
<rect x="3" y="109.8" width="504.8" height="10.3" fill="#0a0a0a"/>
<rect x="15.1" y="109.8" width="42.6" height="10.6" fill="#5e5e5e"/>
<rect x="15.1" y="119.4" width="42.6" height="0.8" fill="#1a7f4b"/>
<line x1="57.7" y1="110.6" x2="57.7" y2="120.1" stroke="#3c3c3c" stroke-width="0.6" />
<line x1="183.4" y1="110.6" x2="183.4" y2="120.1" stroke="#3c3c3c" stroke-width="0.6" />
<line x1="231.5" y1="110.6" x2="231.5" y2="120.1" stroke="#3c3c3c" stroke-width="0.6" />
<line x1="299.5" y1="110.6" x2="299.5" y2="120.1" stroke="#3c3c3c" stroke-width="0.6" />
<line x1="406.9" y1="110.6" x2="406.9" y2="120.1" stroke="#3c3c3c" stroke-width="0.6" />
<line x1="446.5" y1="110.6" x2="446.5" y2="120.1" stroke="#3c3c3c" stroke-width="0.6" />
<line x1="486.7" y1="110.6" x2="486.7" y2="120.1" stroke="#3c3c3c" stroke-width="0.6" />
<line x1="15.1" y1="110.6" x2="15.1" y2="120.1" stroke="#3c3c3c" stroke-width="0.6" />
<path d="M13.8 113.2 V118.6 H8.4 Z" fill="#5a5a5a"/>
<rect x="3" y="120.1" width="12.1" height="361.1" fill="#0a0a0a"/>
<rect x="3" y="359.02" width="12.1" height="9.96" fill="#5e5e5e"/>
<line x1="15.1" y1="120.1" x2="15.1" y2="481.2" stroke="#3c3c3c" stroke-width="0.5" />
<line x1="3.4" y1="130.06" x2="15.1" y2="130.06" stroke="#2e2e2e" stroke-width="0.5" />
<line x1="3.4" y1="140.01" x2="15.1" y2="140.01" stroke="#2e2e2e" stroke-width="0.5" />
<line x1="3.4" y1="149.97" x2="15.1" y2="149.97" stroke="#2e2e2e" stroke-width="0.5" />
<line x1="3.4" y1="159.92" x2="15.1" y2="159.92" stroke="#2e2e2e" stroke-width="0.5" />
<line x1="3.4" y1="169.88" x2="15.1" y2="169.88" stroke="#2e2e2e" stroke-width="0.5" />
<line x1="3.4" y1="179.83" x2="15.1" y2="179.83" stroke="#2e2e2e" stroke-width="0.5" />
<line x1="3.4" y1="189.78" x2="15.1" y2="189.78" stroke="#2e2e2e" stroke-width="0.5" />
<line x1="3.4" y1="199.74" x2="15.1" y2="199.74" stroke="#2e2e2e" stroke-width="0.5" />
<line x1="3.4" y1="209.69" x2="15.1" y2="209.69" stroke="#2e2e2e" stroke-width="0.5" />
<line x1="3.4" y1="219.65" x2="15.1" y2="219.65" stroke="#2e2e2e" stroke-width="0.5" />
<line x1="3.4" y1="229.6" x2="15.1" y2="229.6" stroke="#2e2e2e" stroke-width="0.5" />
<line x1="3.4" y1="239.56" x2="15.1" y2="239.56" stroke="#2e2e2e" stroke-width="0.5" />
<line x1="3.4" y1="249.51" x2="15.1" y2="249.51" stroke="#2e2e2e" stroke-width="0.5" />
<line x1="3.4" y1="259.47" x2="15.1" y2="259.47" stroke="#2e2e2e" stroke-width="0.5" />
<line x1="3.4" y1="269.42" x2="15.1" y2="269.42" stroke="#2e2e2e" stroke-width="0.5" />
<line x1="3.4" y1="279.38" x2="15.1" y2="279.38" stroke="#2e2e2e" stroke-width="0.5" />
<line x1="3.4" y1="289.34" x2="15.1" y2="289.34" stroke="#2e2e2e" stroke-width="0.5" />
<line x1="3.4" y1="299.29" x2="15.1" y2="299.29" stroke="#2e2e2e" stroke-width="0.5" />
<line x1="3.4" y1="309.25" x2="15.1" y2="309.25" stroke="#2e2e2e" stroke-width="0.5" />
<line x1="3.4" y1="319.2" x2="15.1" y2="319.2" stroke="#2e2e2e" stroke-width="0.5" />
<line x1="3.4" y1="329.15" x2="15.1" y2="329.15" stroke="#2e2e2e" stroke-width="0.5" />
<line x1="3.4" y1="339.11" x2="15.1" y2="339.11" stroke="#2e2e2e" stroke-width="0.5" />
<line x1="3.4" y1="349.06" x2="15.1" y2="349.06" stroke="#2e2e2e" stroke-width="0.5" />
<line x1="3.4" y1="359.02" x2="15.1" y2="359.02" stroke="#2e2e2e" stroke-width="0.5" />
<line x1="3.4" y1="368.98" x2="15.1" y2="368.98" stroke="#2e2e2e" stroke-width="0.5" />
<line x1="3.4" y1="378.93" x2="15.1" y2="378.93" stroke="#2e2e2e" stroke-width="0.5" />
<line x1="3.4" y1="388.88" x2="15.1" y2="388.88" stroke="#2e2e2e" stroke-width="0.5" />
<line x1="3.4" y1="398.84" x2="15.1" y2="398.84" stroke="#2e2e2e" stroke-width="0.5" />
<line x1="3.4" y1="408.79" x2="15.1" y2="408.79" stroke="#2e2e2e" stroke-width="0.5" />
<line x1="3.4" y1="418.75" x2="15.1" y2="418.75" stroke="#2e2e2e" stroke-width="0.5" />
<line x1="3.4" y1="428.71" x2="15.1" y2="428.71" stroke="#2e2e2e" stroke-width="0.5" />
<line x1="3.4" y1="438.66" x2="15.1" y2="438.66" stroke="#2e2e2e" stroke-width="0.5" />
<line x1="3.4" y1="448.62" x2="15.1" y2="448.62" stroke="#2e2e2e" stroke-width="0.5" />
<line x1="3.4" y1="458.57" x2="15.1" y2="458.57" stroke="#2e2e2e" stroke-width="0.5" />
<line x1="3.4" y1="468.52" x2="15.1" y2="468.52" stroke="#2e2e2e" stroke-width="0.5" />
<line x1="3.4" y1="478.48" x2="15.1" y2="478.48" stroke="#2e2e2e" stroke-width="0.5" />
<rect x="14.3" y="359.02" width="0.9" height="9.96" fill="#1f8f57"/>
<path d="M15.3 150.16 h2.7 l-2.7 2.7 Z" fill="#1c8a4b"/>
<path d="M15.3 160.12 h2.7 l-2.7 2.7 Z" fill="#1c8a4b"/>
<path d="M15.3 180.03 h2.7 l-2.7 2.7 Z" fill="#1c8a4b"/>
<path d="M15.3 199.94 h2.7 l-2.7 2.7 Z" fill="#1c8a4b"/>
<path d="M15.3 229.8 h2.7 l-2.7 2.7 Z" fill="#1c8a4b"/>
<path d="M15.3 259.67 h2.7 l-2.7 2.7 Z" fill="#1c8a4b"/>
<path d="M15.3 279.58 h2.7 l-2.7 2.7 Z" fill="#1c8a4b"/>
<path d="M15.3 299.49 h2.7 l-2.7 2.7 Z" fill="#1c8a4b"/>
<path d="M15.3 319.4 h2.7 l-2.7 2.7 Z" fill="#1c8a4b"/>
<path d="M15.3 349.26 h2.7 l-2.7 2.7 Z" fill="#1c8a4b"/>
<rect x="87.6" y="130.36" width="93.4" height="228.36" fill="#fbfbfb"/>
<path fill="#a8a8a8" d="M135.64 133h4.02v4.02h-4.02zM155.49 133h4.02v4.02h-4.02zM139.61 172.7h4.02v4.02h-4.02zM143.58 172.7h4.02v4.02h-4.02zM151.52 172.7h4.02v4.02h-4.02zM155.49 172.7h4.02v4.02h-4.02zM167.4 172.7h4.02v4.02h-4.02zM171.37 172.7h4.02v4.02h-4.02zM119.76 192.55h4.02v4.02h-4.02zM163.43 192.55h4.02v4.02h-4.02zM171.37 192.55h4.02v4.02h-4.02z"/>
<path fill="#acacac" d="M91.97 133h4.02v4.02h-4.02zM103.88 133h4.02v4.02h-4.02zM115.79 133h4.02v4.02h-4.02zM147.55 133h4.02v4.02h-4.02zM171.37 133h4.02v4.02h-4.02zM127.7 172.7h4.02v4.02h-4.02zM91.97 192.55h4.02v4.02h-4.02zM155.49 192.55h4.02v4.02h-4.02zM167.4 192.55h4.02v4.02h-4.02zM115.79 212.4h4.02v4.02h-4.02zM135.64 212.4h4.02v4.02h-4.02zM163.43 212.4h4.02v4.02h-4.02zM167.4 212.4h4.02v4.02h-4.02zM107.85 232.25h4.02v4.02h-4.02zM123.73 232.25h4.02v4.02h-4.02zM127.7 232.25h4.02v4.02h-4.02zM155.49 232.25h4.02v4.02h-4.02zM163.43 232.25h4.02v4.02h-4.02zM91.97 252.1h4.02v4.02h-4.02zM103.88 252.1h4.02v4.02h-4.02zM171.37 252.1h4.02v4.02h-4.02zM88 323.56h4.02v4.02h-4.02zM88 343.41h4.02v4.02h-4.02zM95.94 343.41h4.02v4.02h-4.02zM99.91 343.41h4.02v4.02h-4.02zM115.79 343.41h4.02v4.02h-4.02z"/>
<path fill="#b0b0b0" d="M88 133h4.02v4.02h-4.02zM95.94 133h4.02v4.02h-4.02zM107.85 133h4.02v4.02h-4.02zM119.76 133h4.02v4.02h-4.02zM131.67 133h4.02v4.02h-4.02zM159.46 133h4.02v4.02h-4.02zM88 172.7h4.02v4.02h-4.02zM103.88 172.7h4.02v4.02h-4.02zM107.85 172.7h4.02v4.02h-4.02zM123.73 172.7h4.02v4.02h-4.02zM131.67 172.7h4.02v4.02h-4.02zM159.46 172.7h4.02v4.02h-4.02zM95.94 192.55h4.02v4.02h-4.02zM99.91 192.55h4.02v4.02h-4.02zM103.88 192.55h4.02v4.02h-4.02zM111.82 192.55h4.02v4.02h-4.02zM115.79 192.55h4.02v4.02h-4.02zM151.52 192.55h4.02v4.02h-4.02zM107.85 212.4h4.02v4.02h-4.02zM171.37 212.4h4.02v4.02h-4.02zM88 232.25h4.02v4.02h-4.02zM91.97 232.25h4.02v4.02h-4.02zM151.52 232.25h4.02v4.02h-4.02zM111.82 252.1h4.02v4.02h-4.02zM131.67 252.1h4.02v4.02h-4.02zM143.58 252.1h4.02v4.02h-4.02zM163.43 252.1h4.02v4.02h-4.02zM163.43 271.95h4.02v4.02h-4.02zM147.55 283.86h4.02v4.02h-4.02zM99.91 291.8h4.02v4.02h-4.02zM123.73 291.8h4.02v4.02h-4.02zM123.73 303.71h4.02v4.02h-4.02zM159.46 303.71h4.02v4.02h-4.02zM95.94 323.56h4.02v4.02h-4.02zM127.7 323.56h4.02v4.02h-4.02zM131.67 323.56h4.02v4.02h-4.02zM135.64 323.56h4.02v4.02h-4.02zM163.43 323.56h4.02v4.02h-4.02zM131.67 343.41h4.02v4.02h-4.02zM135.64 343.41h4.02v4.02h-4.02zM147.55 343.41h4.02v4.02h-4.02z"/>
<path fill="#b4b4b4" d="M111.82 133h4.02v4.02h-4.02zM123.73 133h4.02v4.02h-4.02zM139.61 133h4.02v4.02h-4.02zM163.43 133h4.02v4.02h-4.02zM111.82 172.7h4.02v4.02h-4.02zM135.64 172.7h4.02v4.02h-4.02zM88 192.55h4.02v4.02h-4.02zM107.85 192.55h4.02v4.02h-4.02zM123.73 192.55h4.02v4.02h-4.02zM99.91 212.4h4.02v4.02h-4.02zM119.76 212.4h4.02v4.02h-4.02zM123.73 212.4h4.02v4.02h-4.02zM143.58 212.4h4.02v4.02h-4.02zM147.55 212.4h4.02v4.02h-4.02zM135.64 264.01h4.02v4.02h-4.02zM88 271.95h4.02v4.02h-4.02zM107.85 271.95h4.02v4.02h-4.02zM123.73 271.95h4.02v4.02h-4.02zM139.61 271.95h4.02v4.02h-4.02zM147.55 271.95h4.02v4.02h-4.02zM151.52 271.95h4.02v4.02h-4.02zM155.49 271.95h4.02v4.02h-4.02zM115.79 283.86h4.02v4.02h-4.02zM123.73 283.86h4.02v4.02h-4.02zM155.49 283.86h4.02v4.02h-4.02zM163.43 283.86h4.02v4.02h-4.02zM167.4 283.86h4.02v4.02h-4.02zM175.34 283.86h4.02v4.02h-4.02zM91.97 291.8h4.02v4.02h-4.02zM103.88 291.8h4.02v4.02h-4.02zM139.61 291.8h4.02v4.02h-4.02zM91.97 303.71h4.02v4.02h-4.02zM115.79 303.71h4.02v4.02h-4.02zM119.76 303.71h4.02v4.02h-4.02zM131.67 303.71h4.02v4.02h-4.02zM147.55 303.71h4.02v4.02h-4.02zM95.94 311.65h4.02v4.02h-4.02zM131.67 311.65h4.02v4.02h-4.02zM135.64 311.65h4.02v4.02h-4.02zM163.43 311.65h4.02v4.02h-4.02zM159.46 323.56h4.02v4.02h-4.02zM171.37 323.56h4.02v4.02h-4.02zM88 331.5h4.02v4.02h-4.02zM103.88 343.41h4.02v4.02h-4.02zM111.82 343.41h4.02v4.02h-4.02zM127.7 343.41h4.02v4.02h-4.02zM143.58 343.41h4.02v4.02h-4.02zM151.52 343.41h4.02v4.02h-4.02zM155.49 343.41h4.02v4.02h-4.02zM155.49 351.35h4.02v4.02h-4.02zM163.43 351.35h4.02v4.02h-4.02zM175.34 351.35h4.02v4.02h-4.02z"/>
<path fill="#b8b8b8" d="M127.7 133h4.02v4.02h-4.02zM143.58 133h4.02v4.02h-4.02zM91.97 172.7h4.02v4.02h-4.02zM147.55 172.7h4.02v4.02h-4.02zM88 212.4h4.02v4.02h-4.02zM95.94 212.4h4.02v4.02h-4.02zM159.46 212.4h4.02v4.02h-4.02zM99.91 232.25h4.02v4.02h-4.02zM115.79 232.25h4.02v4.02h-4.02zM167.4 232.25h4.02v4.02h-4.02zM171.37 232.25h4.02v4.02h-4.02zM175.34 232.25h4.02v4.02h-4.02zM95.94 244.16h4.02v4.02h-4.02zM135.64 244.16h4.02v4.02h-4.02zM139.61 244.16h4.02v4.02h-4.02zM159.46 244.16h4.02v4.02h-4.02zM88 252.1h4.02v4.02h-4.02zM95.94 252.1h4.02v4.02h-4.02zM99.91 252.1h4.02v4.02h-4.02zM107.85 252.1h4.02v4.02h-4.02zM115.79 252.1h4.02v4.02h-4.02zM127.7 252.1h4.02v4.02h-4.02zM167.4 252.1h4.02v4.02h-4.02zM88 264.01h4.02v4.02h-4.02zM95.94 264.01h4.02v4.02h-4.02zM107.85 264.01h4.02v4.02h-4.02zM115.79 264.01h4.02v4.02h-4.02zM119.76 264.01h4.02v4.02h-4.02zM123.73 264.01h4.02v4.02h-4.02zM151.52 264.01h4.02v4.02h-4.02zM95.94 271.95h4.02v4.02h-4.02zM99.91 271.95h4.02v4.02h-4.02zM103.88 271.95h4.02v4.02h-4.02zM119.76 271.95h4.02v4.02h-4.02zM135.64 271.95h4.02v4.02h-4.02zM167.4 271.95h4.02v4.02h-4.02zM107.85 283.86h4.02v4.02h-4.02zM111.82 283.86h4.02v4.02h-4.02zM159.46 283.86h4.02v4.02h-4.02zM95.94 291.8h4.02v4.02h-4.02zM115.79 291.8h4.02v4.02h-4.02zM135.64 291.8h4.02v4.02h-4.02zM155.49 291.8h4.02v4.02h-4.02zM88 303.71h4.02v4.02h-4.02zM103.88 303.71h4.02v4.02h-4.02zM107.85 303.71h4.02v4.02h-4.02zM111.82 303.71h4.02v4.02h-4.02zM127.7 303.71h4.02v4.02h-4.02zM139.61 303.71h4.02v4.02h-4.02zM143.58 303.71h4.02v4.02h-4.02zM155.49 303.71h4.02v4.02h-4.02zM171.37 303.71h4.02v4.02h-4.02zM91.97 311.65h4.02v4.02h-4.02zM99.91 311.65h4.02v4.02h-4.02zM123.73 311.65h4.02v4.02h-4.02zM139.61 311.65h4.02v4.02h-4.02zM159.46 311.65h4.02v4.02h-4.02zM171.37 311.65h4.02v4.02h-4.02zM111.82 323.56h4.02v4.02h-4.02zM119.76 323.56h4.02v4.02h-4.02zM139.61 323.56h4.02v4.02h-4.02zM151.52 323.56h4.02v4.02h-4.02zM167.4 323.56h4.02v4.02h-4.02zM135.64 331.5h4.02v4.02h-4.02zM143.58 331.5h4.02v4.02h-4.02zM147.55 331.5h4.02v4.02h-4.02zM107.85 343.41h4.02v4.02h-4.02zM123.73 351.35h4.02v4.02h-4.02zM151.52 351.35h4.02v4.02h-4.02z"/>
<path fill="#bcbcbc" d="M91.97 164.76h4.02v4.02h-4.02zM103.88 164.76h4.02v4.02h-4.02zM135.64 164.76h4.02v4.02h-4.02zM139.61 164.76h4.02v4.02h-4.02zM143.58 164.76h4.02v4.02h-4.02zM88 184.61h4.02v4.02h-4.02zM127.7 184.61h4.02v4.02h-4.02zM127.7 192.55h4.02v4.02h-4.02zM139.61 192.55h4.02v4.02h-4.02zM143.58 192.55h4.02v4.02h-4.02zM91.97 212.4h4.02v4.02h-4.02zM111.82 212.4h4.02v4.02h-4.02zM131.67 212.4h4.02v4.02h-4.02zM95.94 224.31h4.02v4.02h-4.02zM119.76 224.31h4.02v4.02h-4.02zM123.73 224.31h4.02v4.02h-4.02zM147.55 224.31h4.02v4.02h-4.02zM151.52 224.31h4.02v4.02h-4.02zM171.37 224.31h4.02v4.02h-4.02zM95.94 232.25h4.02v4.02h-4.02zM135.64 232.25h4.02v4.02h-4.02zM139.61 232.25h4.02v4.02h-4.02zM143.58 232.25h4.02v4.02h-4.02zM147.55 232.25h4.02v4.02h-4.02zM88 244.16h4.02v4.02h-4.02zM111.82 244.16h4.02v4.02h-4.02zM147.55 244.16h4.02v4.02h-4.02zM151.52 244.16h4.02v4.02h-4.02zM171.37 244.16h4.02v4.02h-4.02zM119.76 252.1h4.02v4.02h-4.02zM123.73 252.1h4.02v4.02h-4.02zM147.55 252.1h4.02v4.02h-4.02zM91.97 264.01h4.02v4.02h-4.02zM139.61 264.01h4.02v4.02h-4.02zM143.58 264.01h4.02v4.02h-4.02zM155.49 264.01h4.02v4.02h-4.02zM171.37 264.01h4.02v4.02h-4.02zM131.67 271.95h4.02v4.02h-4.02zM159.46 271.95h4.02v4.02h-4.02zM88 283.86h4.02v4.02h-4.02zM91.97 283.86h4.02v4.02h-4.02zM95.94 283.86h4.02v4.02h-4.02zM119.76 283.86h4.02v4.02h-4.02zM127.7 283.86h4.02v4.02h-4.02zM139.61 283.86h4.02v4.02h-4.02zM143.58 283.86h4.02v4.02h-4.02zM88 291.8h4.02v4.02h-4.02zM107.85 291.8h4.02v4.02h-4.02zM131.67 291.8h4.02v4.02h-4.02zM143.58 291.8h4.02v4.02h-4.02zM147.55 291.8h4.02v4.02h-4.02zM163.43 291.8h4.02v4.02h-4.02zM167.4 291.8h4.02v4.02h-4.02zM99.91 303.71h4.02v4.02h-4.02zM135.64 303.71h4.02v4.02h-4.02zM151.52 303.71h4.02v4.02h-4.02zM127.7 311.65h4.02v4.02h-4.02zM143.58 311.65h4.02v4.02h-4.02zM147.55 311.65h4.02v4.02h-4.02zM151.52 311.65h4.02v4.02h-4.02zM167.4 311.65h4.02v4.02h-4.02zM99.91 323.56h4.02v4.02h-4.02zM115.79 323.56h4.02v4.02h-4.02zM91.97 331.5h4.02v4.02h-4.02zM99.91 331.5h4.02v4.02h-4.02zM107.85 331.5h4.02v4.02h-4.02zM111.82 331.5h4.02v4.02h-4.02zM115.79 331.5h4.02v4.02h-4.02zM119.76 331.5h4.02v4.02h-4.02zM123.73 331.5h4.02v4.02h-4.02zM131.67 331.5h4.02v4.02h-4.02zM151.52 331.5h4.02v4.02h-4.02zM155.49 331.5h4.02v4.02h-4.02zM159.46 331.5h4.02v4.02h-4.02zM171.37 331.5h4.02v4.02h-4.02zM88 351.35h4.02v4.02h-4.02zM167.4 351.35h4.02v4.02h-4.02z"/>
<path fill="#c0c0c0" d="M151.52 133h4.02v4.02h-4.02zM167.4 133h4.02v4.02h-4.02zM123.73 144.91h4.02v4.02h-4.02zM143.58 144.91h4.02v4.02h-4.02zM147.55 144.91h4.02v4.02h-4.02zM159.46 144.91h4.02v4.02h-4.02zM163.43 144.91h4.02v4.02h-4.02zM99.91 164.76h4.02v4.02h-4.02zM155.49 164.76h4.02v4.02h-4.02zM159.46 164.76h4.02v4.02h-4.02zM167.4 164.76h4.02v4.02h-4.02zM171.37 164.76h4.02v4.02h-4.02zM95.94 172.7h4.02v4.02h-4.02zM99.91 172.7h4.02v4.02h-4.02zM163.43 172.7h4.02v4.02h-4.02zM111.82 184.61h4.02v4.02h-4.02zM119.76 184.61h4.02v4.02h-4.02zM123.73 184.61h4.02v4.02h-4.02zM155.49 184.61h4.02v4.02h-4.02zM159.46 184.61h4.02v4.02h-4.02zM135.64 192.55h4.02v4.02h-4.02zM147.55 192.55h4.02v4.02h-4.02zM91.97 224.31h4.02v4.02h-4.02zM115.79 224.31h4.02v4.02h-4.02zM139.61 224.31h4.02v4.02h-4.02zM167.4 224.31h4.02v4.02h-4.02zM103.88 244.16h4.02v4.02h-4.02zM119.76 244.16h4.02v4.02h-4.02zM123.73 244.16h4.02v4.02h-4.02zM155.49 244.16h4.02v4.02h-4.02zM163.43 244.16h4.02v4.02h-4.02zM167.4 244.16h4.02v4.02h-4.02zM139.61 252.1h4.02v4.02h-4.02zM151.52 252.1h4.02v4.02h-4.02zM131.67 264.01h4.02v4.02h-4.02zM159.46 264.01h4.02v4.02h-4.02zM91.97 271.95h4.02v4.02h-4.02zM171.37 271.95h4.02v4.02h-4.02zM119.76 291.8h4.02v4.02h-4.02zM171.37 291.8h4.02v4.02h-4.02zM167.4 303.71h4.02v4.02h-4.02zM115.79 311.65h4.02v4.02h-4.02zM155.49 311.65h4.02v4.02h-4.02zM147.55 323.56h4.02v4.02h-4.02zM155.49 323.56h4.02v4.02h-4.02zM95.94 331.5h4.02v4.02h-4.02zM139.61 331.5h4.02v4.02h-4.02zM167.4 331.5h4.02v4.02h-4.02zM91.97 343.41h4.02v4.02h-4.02zM123.73 343.41h4.02v4.02h-4.02zM139.61 343.41h4.02v4.02h-4.02zM159.46 343.41h4.02v4.02h-4.02zM167.4 343.41h4.02v4.02h-4.02zM91.97 351.35h4.02v4.02h-4.02zM99.91 351.35h4.02v4.02h-4.02zM111.82 351.35h4.02v4.02h-4.02zM159.46 351.35h4.02v4.02h-4.02z"/>
<path fill="#c4c4c4" d="M88 144.91h4.02v4.02h-4.02zM91.97 144.91h4.02v4.02h-4.02zM111.82 144.91h4.02v4.02h-4.02zM115.79 144.91h4.02v4.02h-4.02zM119.76 144.91h4.02v4.02h-4.02zM151.52 144.91h4.02v4.02h-4.02zM167.4 144.91h4.02v4.02h-4.02zM171.37 144.91h4.02v4.02h-4.02zM119.76 164.76h4.02v4.02h-4.02zM123.73 164.76h4.02v4.02h-4.02zM131.67 164.76h4.02v4.02h-4.02zM151.52 164.76h4.02v4.02h-4.02zM103.88 184.61h4.02v4.02h-4.02zM107.85 184.61h4.02v4.02h-4.02zM143.58 184.61h4.02v4.02h-4.02zM147.55 184.61h4.02v4.02h-4.02zM163.43 184.61h4.02v4.02h-4.02zM171.37 184.61h4.02v4.02h-4.02zM127.7 212.4h4.02v4.02h-4.02zM151.52 212.4h4.02v4.02h-4.02zM155.49 212.4h4.02v4.02h-4.02zM88 224.31h4.02v4.02h-4.02zM103.88 224.31h4.02v4.02h-4.02zM155.49 224.31h4.02v4.02h-4.02zM111.82 232.25h4.02v4.02h-4.02zM119.76 232.25h4.02v4.02h-4.02zM131.67 232.25h4.02v4.02h-4.02zM99.91 244.16h4.02v4.02h-4.02zM115.79 244.16h4.02v4.02h-4.02zM135.64 252.1h4.02v4.02h-4.02zM99.91 264.01h4.02v4.02h-4.02zM167.4 264.01h4.02v4.02h-4.02zM131.67 283.86h4.02v4.02h-4.02zM135.64 283.86h4.02v4.02h-4.02zM151.52 283.86h4.02v4.02h-4.02zM103.88 311.65h4.02v4.02h-4.02zM111.82 311.65h4.02v4.02h-4.02zM91.97 323.56h4.02v4.02h-4.02zM103.88 323.56h4.02v4.02h-4.02zM107.85 323.56h4.02v4.02h-4.02zM123.73 323.56h4.02v4.02h-4.02zM163.43 331.5h4.02v4.02h-4.02zM119.76 343.41h4.02v4.02h-4.02zM95.94 351.35h4.02v4.02h-4.02zM103.88 351.35h4.02v4.02h-4.02zM115.79 351.35h4.02v4.02h-4.02zM119.76 351.35h4.02v4.02h-4.02zM135.64 351.35h4.02v4.02h-4.02z"/>
<path fill="#c8c8c8" d="M99.91 144.91h4.02v4.02h-4.02zM107.85 144.91h4.02v4.02h-4.02zM127.7 144.91h4.02v4.02h-4.02zM139.61 144.91h4.02v4.02h-4.02zM91.97 184.61h4.02v4.02h-4.02zM99.91 184.61h4.02v4.02h-4.02zM131.67 184.61h4.02v4.02h-4.02zM135.64 184.61h4.02v4.02h-4.02zM139.61 184.61h4.02v4.02h-4.02zM167.4 184.61h4.02v4.02h-4.02zM135.64 224.31h4.02v4.02h-4.02zM143.58 224.31h4.02v4.02h-4.02zM159.46 224.31h4.02v4.02h-4.02zM163.43 224.31h4.02v4.02h-4.02zM103.88 264.01h4.02v4.02h-4.02zM111.82 264.01h4.02v4.02h-4.02zM127.7 264.01h4.02v4.02h-4.02zM147.55 264.01h4.02v4.02h-4.02zM163.43 264.01h4.02v4.02h-4.02zM115.79 271.95h4.02v4.02h-4.02zM127.7 271.95h4.02v4.02h-4.02zM171.37 283.86h4.02v4.02h-4.02zM111.82 291.8h4.02v4.02h-4.02zM127.7 291.8h4.02v4.02h-4.02zM175.34 303.71h4.02v4.02h-4.02zM88 311.65h4.02v4.02h-4.02zM107.85 351.35h4.02v4.02h-4.02zM127.7 351.35h4.02v4.02h-4.02zM143.58 351.35h4.02v4.02h-4.02zM147.55 351.35h4.02v4.02h-4.02z"/>
<path fill="#cccccc" d="M135.64 144.91h4.02v4.02h-4.02zM155.49 144.91h4.02v4.02h-4.02zM88 164.76h4.02v4.02h-4.02zM95.94 164.76h4.02v4.02h-4.02zM147.55 164.76h4.02v4.02h-4.02zM163.43 164.76h4.02v4.02h-4.02zM107.85 224.31h4.02v4.02h-4.02zM127.7 224.31h4.02v4.02h-4.02zM131.67 224.31h4.02v4.02h-4.02zM91.97 244.16h4.02v4.02h-4.02zM107.85 244.16h4.02v4.02h-4.02zM131.67 244.16h4.02v4.02h-4.02zM131.67 351.35h4.02v4.02h-4.02z"/>
<path fill="#d0d0d0" d="M131.67 144.91h4.02v4.02h-4.02zM115.79 164.76h4.02v4.02h-4.02zM127.7 164.76h4.02v4.02h-4.02zM175.34 164.76h4.02v4.02h-4.02zM95.94 184.61h4.02v4.02h-4.02zM151.52 184.61h4.02v4.02h-4.02z"/>
<path fill="#d4d4d4" d="M175.34 252.1h4.02v4.02h-4.02zM175.34 271.95h4.02v4.02h-4.02z"/>
<path fill="#d8d8d8" d="M99.91 133h4.02v4.02h-4.02zM175.34 133h4.02v4.02h-4.02zM115.79 172.7h4.02v4.02h-4.02zM119.76 172.7h4.02v4.02h-4.02zM131.67 192.55h4.02v4.02h-4.02zM159.46 192.55h4.02v4.02h-4.02zM175.34 192.55h4.02v4.02h-4.02zM175.34 212.4h4.02v4.02h-4.02zM175.34 224.31h4.02v4.02h-4.02zM175.34 244.16h4.02v4.02h-4.02zM175.34 291.8h4.02v4.02h-4.02zM175.34 311.65h4.02v4.02h-4.02z"/>
<path fill="#dcdcdc" d="M115.79 140.94h4.02v4.02h-4.02zM123.73 140.94h4.02v4.02h-4.02zM143.58 140.94h4.02v4.02h-4.02zM147.55 140.94h4.02v4.02h-4.02zM151.52 140.94h4.02v4.02h-4.02zM159.46 140.94h4.02v4.02h-4.02zM163.43 140.94h4.02v4.02h-4.02zM171.37 140.94h4.02v4.02h-4.02zM175.34 144.91h4.02v4.02h-4.02zM91.97 160.79h4.02v4.02h-4.02zM99.91 160.79h4.02v4.02h-4.02zM103.88 160.79h4.02v4.02h-4.02zM135.64 160.79h4.02v4.02h-4.02zM139.61 160.79h4.02v4.02h-4.02zM143.58 160.79h4.02v4.02h-4.02zM155.49 160.79h4.02v4.02h-4.02zM159.46 160.79h4.02v4.02h-4.02zM167.4 160.79h4.02v4.02h-4.02zM171.37 160.79h4.02v4.02h-4.02zM175.34 172.7h4.02v4.02h-4.02zM88 180.64h4.02v4.02h-4.02zM127.7 180.64h4.02v4.02h-4.02zM103.88 212.4h4.02v4.02h-4.02zM139.61 212.4h4.02v4.02h-4.02zM103.88 232.25h4.02v4.02h-4.02zM159.46 232.25h4.02v4.02h-4.02zM155.49 252.1h4.02v4.02h-4.02zM159.46 252.1h4.02v4.02h-4.02zM111.82 271.95h4.02v4.02h-4.02zM143.58 271.95h4.02v4.02h-4.02zM99.91 283.86h4.02v4.02h-4.02zM103.88 283.86h4.02v4.02h-4.02zM151.52 291.8h4.02v4.02h-4.02zM159.46 291.8h4.02v4.02h-4.02zM95.94 303.71h4.02v4.02h-4.02zM163.43 303.71h4.02v4.02h-4.02zM107.85 311.65h4.02v4.02h-4.02zM119.76 311.65h4.02v4.02h-4.02zM143.58 323.56h4.02v4.02h-4.02zM175.34 323.56h4.02v4.02h-4.02zM175.34 331.5h4.02v4.02h-4.02zM163.43 343.41h4.02v4.02h-4.02zM171.37 343.41h4.02v4.02h-4.02z"/>
<path fill="#e0e0e0" d="M88 140.94h4.02v4.02h-4.02zM91.97 140.94h4.02v4.02h-4.02zM99.91 140.94h4.02v4.02h-4.02zM107.85 140.94h4.02v4.02h-4.02zM111.82 140.94h4.02v4.02h-4.02zM119.76 140.94h4.02v4.02h-4.02zM127.7 140.94h4.02v4.02h-4.02zM139.61 140.94h4.02v4.02h-4.02zM167.4 140.94h4.02v4.02h-4.02zM119.76 160.79h4.02v4.02h-4.02zM123.73 160.79h4.02v4.02h-4.02zM131.67 160.79h4.02v4.02h-4.02zM151.52 160.79h4.02v4.02h-4.02zM107.85 164.76h4.02v4.02h-4.02zM111.82 164.76h4.02v4.02h-4.02zM103.88 180.64h4.02v4.02h-4.02zM107.85 180.64h4.02v4.02h-4.02zM111.82 180.64h4.02v4.02h-4.02zM119.76 180.64h4.02v4.02h-4.02zM123.73 180.64h4.02v4.02h-4.02zM143.58 180.64h4.02v4.02h-4.02zM147.55 180.64h4.02v4.02h-4.02zM155.49 180.64h4.02v4.02h-4.02zM159.46 180.64h4.02v4.02h-4.02zM163.43 180.64h4.02v4.02h-4.02zM171.37 180.64h4.02v4.02h-4.02zM115.79 184.61h4.02v4.02h-4.02zM175.34 184.61h4.02v4.02h-4.02zM95.94 220.34h4.02v4.02h-4.02zM119.76 220.34h4.02v4.02h-4.02zM123.73 220.34h4.02v4.02h-4.02zM147.55 220.34h4.02v4.02h-4.02zM151.52 220.34h4.02v4.02h-4.02zM99.91 224.31h4.02v4.02h-4.02zM111.82 224.31h4.02v4.02h-4.02zM179.31 232.25h1.74v4.02h-1.74zM127.7 244.16h4.02v4.02h-4.02zM143.58 244.16h4.02v4.02h-4.02zM175.34 264.01h4.02v4.02h-4.02zM179.31 303.71h1.74v4.02h-1.74zM103.88 331.5h4.02v4.02h-4.02zM127.7 331.5h4.02v4.02h-4.02zM175.34 343.41h4.02v4.02h-4.02zM139.61 351.35h4.02v4.02h-4.02zM171.37 351.35h4.02v4.02h-4.02zM155.49 355.32h4.02v4.02h-4.02zM163.43 355.32h4.02v4.02h-4.02zM175.34 355.32h4.02v4.02h-4.02z"/>
<path fill="#e4e4e4" d="M131.67 140.94h4.02v4.02h-4.02zM135.64 140.94h4.02v4.02h-4.02zM155.49 140.94h4.02v4.02h-4.02zM95.94 144.91h4.02v4.02h-4.02zM103.88 144.91h4.02v4.02h-4.02zM88 160.79h4.02v4.02h-4.02zM95.94 160.79h4.02v4.02h-4.02zM115.79 160.79h4.02v4.02h-4.02zM127.7 160.79h4.02v4.02h-4.02zM147.55 160.79h4.02v4.02h-4.02zM163.43 160.79h4.02v4.02h-4.02zM175.34 160.79h4.02v4.02h-4.02zM179.31 164.76h1.74v4.02h-1.74zM91.97 180.64h4.02v4.02h-4.02zM99.91 180.64h4.02v4.02h-4.02zM131.67 180.64h4.02v4.02h-4.02zM135.64 180.64h4.02v4.02h-4.02zM139.61 180.64h4.02v4.02h-4.02zM167.4 180.64h4.02v4.02h-4.02zM179.31 184.61h1.74v4.02h-1.74zM88 220.34h4.02v4.02h-4.02zM91.97 220.34h4.02v4.02h-4.02zM103.88 220.34h4.02v4.02h-4.02zM115.79 220.34h4.02v4.02h-4.02zM139.61 220.34h4.02v4.02h-4.02zM155.49 220.34h4.02v4.02h-4.02zM167.4 220.34h4.02v4.02h-4.02zM171.37 220.34h4.02v4.02h-4.02zM88 240.19h4.02v4.02h-4.02zM95.94 240.19h4.02v4.02h-4.02zM103.88 240.19h4.02v4.02h-4.02zM111.82 240.19h4.02v4.02h-4.02zM119.76 240.19h4.02v4.02h-4.02zM123.73 240.19h4.02v4.02h-4.02zM135.64 240.19h4.02v4.02h-4.02zM139.61 240.19h4.02v4.02h-4.02zM147.55 240.19h4.02v4.02h-4.02zM151.52 240.19h4.02v4.02h-4.02zM155.49 240.19h4.02v4.02h-4.02zM159.46 240.19h4.02v4.02h-4.02zM163.43 240.19h4.02v4.02h-4.02zM167.4 240.19h4.02v4.02h-4.02zM171.37 240.19h4.02v4.02h-4.02zM88 260.04h4.02v4.02h-4.02zM91.97 260.04h4.02v4.02h-4.02zM95.94 260.04h4.02v4.02h-4.02zM107.85 260.04h4.02v4.02h-4.02zM115.79 260.04h4.02v4.02h-4.02zM119.76 260.04h4.02v4.02h-4.02zM123.73 260.04h4.02v4.02h-4.02zM135.64 260.04h4.02v4.02h-4.02zM139.61 260.04h4.02v4.02h-4.02zM143.58 260.04h4.02v4.02h-4.02zM151.52 260.04h4.02v4.02h-4.02zM155.49 260.04h4.02v4.02h-4.02zM171.37 260.04h4.02v4.02h-4.02zM179.31 264.01h1.74v4.02h-1.74zM163.43 275.92h4.02v4.02h-4.02zM107.85 279.89h4.02v4.02h-4.02zM111.82 279.89h4.02v4.02h-4.02zM115.79 279.89h4.02v4.02h-4.02zM123.73 279.89h4.02v4.02h-4.02zM147.55 279.89h4.02v4.02h-4.02zM155.49 279.89h4.02v4.02h-4.02zM159.46 279.89h4.02v4.02h-4.02zM163.43 279.89h4.02v4.02h-4.02zM167.4 279.89h4.02v4.02h-4.02zM175.34 279.89h4.02v4.02h-4.02zM179.31 283.86h1.74v4.02h-1.74zM91.97 295.77h4.02v4.02h-4.02zM99.91 295.77h4.02v4.02h-4.02zM103.88 295.77h4.02v4.02h-4.02zM123.73 295.77h4.02v4.02h-4.02zM139.61 295.77h4.02v4.02h-4.02zM123.73 299.74h4.02v4.02h-4.02zM159.46 299.74h4.02v4.02h-4.02zM91.97 315.62h4.02v4.02h-4.02zM95.94 315.62h4.02v4.02h-4.02zM99.91 315.62h4.02v4.02h-4.02zM123.73 315.62h4.02v4.02h-4.02zM131.67 315.62h4.02v4.02h-4.02zM135.64 315.62h4.02v4.02h-4.02zM139.61 315.62h4.02v4.02h-4.02zM159.46 315.62h4.02v4.02h-4.02zM163.43 315.62h4.02v4.02h-4.02zM171.37 315.62h4.02v4.02h-4.02zM88 335.47h4.02v4.02h-4.02zM91.97 335.47h4.02v4.02h-4.02zM99.91 335.47h4.02v4.02h-4.02zM107.85 335.47h4.02v4.02h-4.02zM111.82 335.47h4.02v4.02h-4.02zM115.79 335.47h4.02v4.02h-4.02zM119.76 335.47h4.02v4.02h-4.02zM123.73 335.47h4.02v4.02h-4.02zM131.67 335.47h4.02v4.02h-4.02zM135.64 335.47h4.02v4.02h-4.02zM143.58 335.47h4.02v4.02h-4.02zM147.55 335.47h4.02v4.02h-4.02zM151.52 335.47h4.02v4.02h-4.02zM155.49 335.47h4.02v4.02h-4.02zM159.46 335.47h4.02v4.02h-4.02zM171.37 335.47h4.02v4.02h-4.02zM179.31 351.35h1.74v4.02h-1.74zM88 355.32h4.02v4.02h-4.02zM91.97 355.32h4.02v4.02h-4.02zM95.94 355.32h4.02v4.02h-4.02zM99.91 355.32h4.02v4.02h-4.02zM103.88 355.32h4.02v4.02h-4.02zM111.82 355.32h4.02v4.02h-4.02zM115.79 355.32h4.02v4.02h-4.02zM119.76 355.32h4.02v4.02h-4.02zM123.73 355.32h4.02v4.02h-4.02zM135.64 355.32h4.02v4.02h-4.02zM151.52 355.32h4.02v4.02h-4.02zM159.46 355.32h4.02v4.02h-4.02zM167.4 355.32h4.02v4.02h-4.02z"/>
<path fill="#e8e8e8" d="M95.94 180.64h4.02v4.02h-4.02zM151.52 180.64h4.02v4.02h-4.02zM107.85 220.34h4.02v4.02h-4.02zM127.7 220.34h4.02v4.02h-4.02zM131.67 220.34h4.02v4.02h-4.02zM135.64 220.34h4.02v4.02h-4.02zM143.58 220.34h4.02v4.02h-4.02zM159.46 220.34h4.02v4.02h-4.02zM163.43 220.34h4.02v4.02h-4.02zM88 236.22h4.02v4.02h-4.02zM91.97 236.22h4.02v4.02h-4.02zM107.85 236.22h4.02v4.02h-4.02zM123.73 236.22h4.02v4.02h-4.02zM127.7 236.22h4.02v4.02h-4.02zM151.52 236.22h4.02v4.02h-4.02zM155.49 236.22h4.02v4.02h-4.02zM163.43 236.22h4.02v4.02h-4.02zM91.97 240.19h4.02v4.02h-4.02zM99.91 240.19h4.02v4.02h-4.02zM107.85 240.19h4.02v4.02h-4.02zM115.79 240.19h4.02v4.02h-4.02zM131.67 240.19h4.02v4.02h-4.02zM88 256.07h4.02v4.02h-4.02zM91.97 256.07h4.02v4.02h-4.02zM95.94 256.07h4.02v4.02h-4.02zM99.91 256.07h4.02v4.02h-4.02zM103.88 256.07h4.02v4.02h-4.02zM107.85 256.07h4.02v4.02h-4.02zM111.82 256.07h4.02v4.02h-4.02zM115.79 256.07h4.02v4.02h-4.02zM127.7 256.07h4.02v4.02h-4.02zM131.67 256.07h4.02v4.02h-4.02zM143.58 256.07h4.02v4.02h-4.02zM163.43 256.07h4.02v4.02h-4.02zM167.4 256.07h4.02v4.02h-4.02zM171.37 256.07h4.02v4.02h-4.02zM99.91 260.04h4.02v4.02h-4.02zM103.88 260.04h4.02v4.02h-4.02zM111.82 260.04h4.02v4.02h-4.02zM127.7 260.04h4.02v4.02h-4.02zM131.67 260.04h4.02v4.02h-4.02zM147.55 260.04h4.02v4.02h-4.02zM159.46 260.04h4.02v4.02h-4.02zM163.43 260.04h4.02v4.02h-4.02zM167.4 260.04h4.02v4.02h-4.02zM88 275.92h4.02v4.02h-4.02zM95.94 275.92h4.02v4.02h-4.02zM99.91 275.92h4.02v4.02h-4.02zM103.88 275.92h4.02v4.02h-4.02zM107.85 275.92h4.02v4.02h-4.02zM119.76 275.92h4.02v4.02h-4.02zM123.73 275.92h4.02v4.02h-4.02zM131.67 275.92h4.02v4.02h-4.02zM135.64 275.92h4.02v4.02h-4.02zM139.61 275.92h4.02v4.02h-4.02zM147.55 275.92h4.02v4.02h-4.02zM151.52 275.92h4.02v4.02h-4.02zM155.49 275.92h4.02v4.02h-4.02zM159.46 275.92h4.02v4.02h-4.02zM167.4 275.92h4.02v4.02h-4.02zM88 279.89h4.02v4.02h-4.02zM91.97 279.89h4.02v4.02h-4.02zM95.94 279.89h4.02v4.02h-4.02zM119.76 279.89h4.02v4.02h-4.02zM127.7 279.89h4.02v4.02h-4.02zM131.67 279.89h4.02v4.02h-4.02zM135.64 279.89h4.02v4.02h-4.02zM139.61 279.89h4.02v4.02h-4.02zM143.58 279.89h4.02v4.02h-4.02zM151.52 279.89h4.02v4.02h-4.02zM88 295.77h4.02v4.02h-4.02zM95.94 295.77h4.02v4.02h-4.02zM107.85 295.77h4.02v4.02h-4.02zM115.79 295.77h4.02v4.02h-4.02zM119.76 295.77h4.02v4.02h-4.02zM131.67 295.77h4.02v4.02h-4.02zM135.64 295.77h4.02v4.02h-4.02zM143.58 295.77h4.02v4.02h-4.02zM147.55 295.77h4.02v4.02h-4.02zM155.49 295.77h4.02v4.02h-4.02zM163.43 295.77h4.02v4.02h-4.02zM167.4 295.77h4.02v4.02h-4.02zM171.37 295.77h4.02v4.02h-4.02zM88 299.74h4.02v4.02h-4.02zM91.97 299.74h4.02v4.02h-4.02zM99.91 299.74h4.02v4.02h-4.02zM103.88 299.74h4.02v4.02h-4.02zM107.85 299.74h4.02v4.02h-4.02zM111.82 299.74h4.02v4.02h-4.02zM115.79 299.74h4.02v4.02h-4.02zM119.76 299.74h4.02v4.02h-4.02zM127.7 299.74h4.02v4.02h-4.02zM131.67 299.74h4.02v4.02h-4.02zM135.64 299.74h4.02v4.02h-4.02zM139.61 299.74h4.02v4.02h-4.02zM143.58 299.74h4.02v4.02h-4.02zM147.55 299.74h4.02v4.02h-4.02zM151.52 299.74h4.02v4.02h-4.02zM155.49 299.74h4.02v4.02h-4.02zM167.4 299.74h4.02v4.02h-4.02zM171.37 299.74h4.02v4.02h-4.02zM103.88 315.62h4.02v4.02h-4.02zM111.82 315.62h4.02v4.02h-4.02zM115.79 315.62h4.02v4.02h-4.02zM127.7 315.62h4.02v4.02h-4.02zM143.58 315.62h4.02v4.02h-4.02zM147.55 315.62h4.02v4.02h-4.02zM151.52 315.62h4.02v4.02h-4.02zM155.49 315.62h4.02v4.02h-4.02zM167.4 315.62h4.02v4.02h-4.02zM88 319.59h4.02v4.02h-4.02zM95.94 319.59h4.02v4.02h-4.02zM99.91 319.59h4.02v4.02h-4.02zM111.82 319.59h4.02v4.02h-4.02zM115.79 319.59h4.02v4.02h-4.02zM119.76 319.59h4.02v4.02h-4.02zM127.7 319.59h4.02v4.02h-4.02zM131.67 319.59h4.02v4.02h-4.02zM135.64 319.59h4.02v4.02h-4.02zM139.61 319.59h4.02v4.02h-4.02zM151.52 319.59h4.02v4.02h-4.02zM159.46 319.59h4.02v4.02h-4.02zM163.43 319.59h4.02v4.02h-4.02zM167.4 319.59h4.02v4.02h-4.02zM171.37 319.59h4.02v4.02h-4.02zM179.31 323.56h1.74v4.02h-1.74zM95.94 335.47h4.02v4.02h-4.02zM139.61 335.47h4.02v4.02h-4.02zM163.43 335.47h4.02v4.02h-4.02zM167.4 335.47h4.02v4.02h-4.02zM88 339.44h4.02v4.02h-4.02zM95.94 339.44h4.02v4.02h-4.02zM99.91 339.44h4.02v4.02h-4.02zM103.88 339.44h4.02v4.02h-4.02zM111.82 339.44h4.02v4.02h-4.02zM115.79 339.44h4.02v4.02h-4.02zM127.7 339.44h4.02v4.02h-4.02zM131.67 339.44h4.02v4.02h-4.02zM135.64 339.44h4.02v4.02h-4.02zM143.58 339.44h4.02v4.02h-4.02zM147.55 339.44h4.02v4.02h-4.02zM151.52 339.44h4.02v4.02h-4.02zM155.49 339.44h4.02v4.02h-4.02zM107.85 355.32h4.02v4.02h-4.02zM127.7 355.32h4.02v4.02h-4.02zM131.67 355.32h4.02v4.02h-4.02zM143.58 355.32h4.02v4.02h-4.02zM147.55 355.32h4.02v4.02h-4.02z"/>
<path fill="#ececec" d="M135.64 136.97h4.02v4.02h-4.02zM155.49 136.97h4.02v4.02h-4.02zM95.94 140.94h4.02v4.02h-4.02zM103.88 140.94h4.02v4.02h-4.02zM175.34 140.94h4.02v4.02h-4.02zM107.85 160.79h4.02v4.02h-4.02zM111.82 160.79h4.02v4.02h-4.02zM88 176.67h4.02v4.02h-4.02zM103.88 176.67h4.02v4.02h-4.02zM107.85 176.67h4.02v4.02h-4.02zM111.82 176.67h4.02v4.02h-4.02zM123.73 176.67h4.02v4.02h-4.02zM127.7 176.67h4.02v4.02h-4.02zM131.67 176.67h4.02v4.02h-4.02zM135.64 176.67h4.02v4.02h-4.02zM139.61 176.67h4.02v4.02h-4.02zM143.58 176.67h4.02v4.02h-4.02zM151.52 176.67h4.02v4.02h-4.02zM155.49 176.67h4.02v4.02h-4.02zM159.46 176.67h4.02v4.02h-4.02zM167.4 176.67h4.02v4.02h-4.02zM171.37 176.67h4.02v4.02h-4.02zM88 196.52h4.02v4.02h-4.02zM91.97 196.52h4.02v4.02h-4.02zM95.94 196.52h4.02v4.02h-4.02zM99.91 196.52h4.02v4.02h-4.02zM103.88 196.52h4.02v4.02h-4.02zM107.85 196.52h4.02v4.02h-4.02zM111.82 196.52h4.02v4.02h-4.02zM115.79 196.52h4.02v4.02h-4.02zM119.76 196.52h4.02v4.02h-4.02zM123.73 196.52h4.02v4.02h-4.02zM127.7 196.52h4.02v4.02h-4.02zM139.61 196.52h4.02v4.02h-4.02zM143.58 196.52h4.02v4.02h-4.02zM151.52 196.52h4.02v4.02h-4.02zM155.49 196.52h4.02v4.02h-4.02zM163.43 196.52h4.02v4.02h-4.02zM167.4 196.52h4.02v4.02h-4.02zM171.37 196.52h4.02v4.02h-4.02zM88 216.37h4.02v4.02h-4.02zM91.97 216.37h4.02v4.02h-4.02zM95.94 216.37h4.02v4.02h-4.02zM99.91 216.37h4.02v4.02h-4.02zM107.85 216.37h4.02v4.02h-4.02zM111.82 216.37h4.02v4.02h-4.02zM115.79 216.37h4.02v4.02h-4.02zM119.76 216.37h4.02v4.02h-4.02zM123.73 216.37h4.02v4.02h-4.02zM131.67 216.37h4.02v4.02h-4.02zM135.64 216.37h4.02v4.02h-4.02zM143.58 216.37h4.02v4.02h-4.02zM147.55 216.37h4.02v4.02h-4.02zM159.46 216.37h4.02v4.02h-4.02zM163.43 216.37h4.02v4.02h-4.02zM167.4 216.37h4.02v4.02h-4.02zM171.37 216.37h4.02v4.02h-4.02zM175.34 220.34h4.02v4.02h-4.02zM95.94 236.22h4.02v4.02h-4.02zM99.91 236.22h4.02v4.02h-4.02zM111.82 236.22h4.02v4.02h-4.02zM115.79 236.22h4.02v4.02h-4.02zM119.76 236.22h4.02v4.02h-4.02zM131.67 236.22h4.02v4.02h-4.02zM135.64 236.22h4.02v4.02h-4.02zM139.61 236.22h4.02v4.02h-4.02zM143.58 236.22h4.02v4.02h-4.02zM147.55 236.22h4.02v4.02h-4.02zM167.4 236.22h4.02v4.02h-4.02zM171.37 236.22h4.02v4.02h-4.02zM175.34 236.22h4.02v4.02h-4.02zM175.34 240.19h4.02v4.02h-4.02zM119.76 256.07h4.02v4.02h-4.02zM123.73 256.07h4.02v4.02h-4.02zM135.64 256.07h4.02v4.02h-4.02zM139.61 256.07h4.02v4.02h-4.02zM147.55 256.07h4.02v4.02h-4.02zM151.52 256.07h4.02v4.02h-4.02zM91.97 275.92h4.02v4.02h-4.02zM115.79 275.92h4.02v4.02h-4.02zM127.7 275.92h4.02v4.02h-4.02zM171.37 275.92h4.02v4.02h-4.02zM171.37 279.89h4.02v4.02h-4.02zM111.82 295.77h4.02v4.02h-4.02zM127.7 295.77h4.02v4.02h-4.02zM175.34 299.74h4.02v4.02h-4.02zM88 315.62h4.02v4.02h-4.02zM91.97 319.59h4.02v4.02h-4.02zM103.88 319.59h4.02v4.02h-4.02zM107.85 319.59h4.02v4.02h-4.02zM123.73 319.59h4.02v4.02h-4.02zM147.55 319.59h4.02v4.02h-4.02zM155.49 319.59h4.02v4.02h-4.02zM91.97 339.44h4.02v4.02h-4.02zM107.85 339.44h4.02v4.02h-4.02zM119.76 339.44h4.02v4.02h-4.02zM123.73 339.44h4.02v4.02h-4.02zM139.61 339.44h4.02v4.02h-4.02zM159.46 339.44h4.02v4.02h-4.02zM167.4 339.44h4.02v4.02h-4.02z"/>
<path fill="#f0f0f0" d="M88 136.97h4.02v4.02h-4.02zM91.97 136.97h4.02v4.02h-4.02zM95.94 136.97h4.02v4.02h-4.02zM103.88 136.97h4.02v4.02h-4.02zM107.85 136.97h4.02v4.02h-4.02zM111.82 136.97h4.02v4.02h-4.02zM115.79 136.97h4.02v4.02h-4.02zM119.76 136.97h4.02v4.02h-4.02zM123.73 136.97h4.02v4.02h-4.02zM127.7 136.97h4.02v4.02h-4.02zM131.67 136.97h4.02v4.02h-4.02zM139.61 136.97h4.02v4.02h-4.02zM143.58 136.97h4.02v4.02h-4.02zM147.55 136.97h4.02v4.02h-4.02zM151.52 136.97h4.02v4.02h-4.02zM159.46 136.97h4.02v4.02h-4.02zM163.43 136.97h4.02v4.02h-4.02zM167.4 136.97h4.02v4.02h-4.02zM171.37 136.97h4.02v4.02h-4.02zM179.31 160.79h1.74v4.02h-1.74zM91.97 176.67h4.02v4.02h-4.02zM95.94 176.67h4.02v4.02h-4.02zM99.91 176.67h4.02v4.02h-4.02zM147.55 176.67h4.02v4.02h-4.02zM163.43 176.67h4.02v4.02h-4.02zM115.79 180.64h4.02v4.02h-4.02zM175.34 180.64h4.02v4.02h-4.02zM179.31 180.64h1.74v4.02h-1.74zM135.64 196.52h4.02v4.02h-4.02zM147.55 196.52h4.02v4.02h-4.02zM127.7 216.37h4.02v4.02h-4.02zM151.52 216.37h4.02v4.02h-4.02zM155.49 216.37h4.02v4.02h-4.02zM99.91 220.34h4.02v4.02h-4.02zM111.82 220.34h4.02v4.02h-4.02zM127.7 240.19h4.02v4.02h-4.02zM143.58 240.19h4.02v4.02h-4.02zM155.49 256.07h4.02v4.02h-4.02zM159.46 256.07h4.02v4.02h-4.02zM175.34 256.07h4.02v4.02h-4.02zM175.34 260.04h4.02v4.02h-4.02zM111.82 275.92h4.02v4.02h-4.02zM143.58 275.92h4.02v4.02h-4.02zM175.34 275.92h4.02v4.02h-4.02zM99.91 279.89h4.02v4.02h-4.02zM103.88 279.89h4.02v4.02h-4.02zM151.52 295.77h4.02v4.02h-4.02zM159.46 295.77h4.02v4.02h-4.02zM175.34 295.77h4.02v4.02h-4.02zM95.94 299.74h4.02v4.02h-4.02zM163.43 299.74h4.02v4.02h-4.02zM107.85 315.62h4.02v4.02h-4.02zM119.76 315.62h4.02v4.02h-4.02zM175.34 315.62h4.02v4.02h-4.02zM143.58 319.59h4.02v4.02h-4.02zM175.34 319.59h4.02v4.02h-4.02zM103.88 335.47h4.02v4.02h-4.02zM127.7 335.47h4.02v4.02h-4.02zM175.34 335.47h4.02v4.02h-4.02zM139.61 355.32h4.02v4.02h-4.02zM171.37 355.32h4.02v4.02h-4.02zM179.31 355.32h1.74v4.02h-1.74z"/>
<path fill="#f4f4f4" d="M99.91 136.97h4.02v4.02h-4.02zM175.34 136.97h4.02v4.02h-4.02zM115.79 176.67h4.02v4.02h-4.02zM119.76 176.67h4.02v4.02h-4.02zM175.34 176.67h4.02v4.02h-4.02zM131.67 196.52h4.02v4.02h-4.02zM159.46 196.52h4.02v4.02h-4.02zM175.34 196.52h4.02v4.02h-4.02zM103.88 216.37h4.02v4.02h-4.02zM139.61 216.37h4.02v4.02h-4.02zM175.34 216.37h4.02v4.02h-4.02zM103.88 236.22h4.02v4.02h-4.02zM159.46 236.22h4.02v4.02h-4.02zM179.31 236.22h1.74v4.02h-1.74zM179.31 260.04h1.74v4.02h-1.74zM179.31 279.89h1.74v4.02h-1.74zM179.31 299.74h1.74v4.02h-1.74zM179.31 319.59h1.74v4.02h-1.74zM163.43 339.44h4.02v4.02h-4.02zM171.37 339.44h4.02v4.02h-4.02zM175.34 339.44h4.02v4.02h-4.02z"/>
<rect x="15.6" y="359.32" width="41.8" height="9.46" stroke="#1f7a45" stroke-width="1" fill="none"/>
<rect x="56.9" y="368.28" width="1.6" height="1.6" stroke="#ffffff" stroke-width="0.4" fill="#1f7a45"/>
<rect x="507.8" y="109.8" width="10.2" height="371.4" fill="#171717"/>
<path d="M510.7 116.4 L512.9 113.4 L515.1 116.4 Z" fill="#bdbdbd"/>
<path d="M510.7 477 L512.9 480 L515.1 477 Z" fill="#bdbdbd"/>
<rect x="511.1" y="119.3" width="3.9" height="335.4" fill="#9b9b9b" rx="1.9"/>
<rect x="3" y="481.2" width="515" height="16.2" fill="#212121"/>
<line x1="3" y1="481.2" x2="518" y2="481.2" stroke="#333333" stroke-width="0.6" />
<path d="M18.3 485.9 L16.4 487.7 L18.3 489.5 Z" fill="#8a8a8a"/>
<path d="M30.2 485.9 L32.1 487.7 L30.2 489.5 Z" fill="#8a8a8a"/>
<rect x="52" y="481.2" width="76.2" height="11.9" fill="#ffffff"/>
<rect x="52" y="492.2" width="76.2" height="1" fill="#1f7a45"/>
<circle cx="149" cy="487.7" r="3.2" fill="none" stroke="#d0d0d0" stroke-width="0.7"/><path d="M147.2 487.7 H150.8 M149 485.9 V489.5" stroke="#d0d0d0" stroke-width="0.7"/>
<rect x="305.2" y="481.6" width="13.7" height="15.6" fill="#0d0d0d"/>
<circle cx="312" cy="485.6" r="0.45" fill="#c8c8c8"/>
<circle cx="312" cy="487.7" r="0.45" fill="#c8c8c8"/>
<circle cx="312" cy="489.8" r="0.45" fill="#c8c8c8"/>
<rect x="318.9" y="481.6" width="189" height="15.6" fill="#171717"/>
<path d="M324.4 485.6 L321.6 487.8 L324.4 490 Z" fill="#bdbdbd"/>
<path d="M502.8 485.6 L505.6 487.8 L502.8 490 Z" fill="#bdbdbd"/>
<rect x="327.3" y="485.8" width="151.1" height="4.1" fill="#9b9b9b" rx="2"/>
<rect x="3.3" y="497.2" width="514.4" height="9.3" fill="#0f0f0f"/>
<svg x="29.6" y="497.4" width="7.4" height="7.4" viewBox="0 0 7.4 7.4" overflow="visible"><circle cx="3.2" cy="1.5" r="0.9" fill="none" stroke="#e0e0e0" stroke-width="0.6"/><path d="M0.6 3 H5.8 M3.2 3 V4.8 M3.2 4.8 L1.6 7 M3.2 4.8 L4.6 6.4" fill="none" stroke="#e0e0e0" stroke-width="0.6"/><path d="M4.4 5.2 L6.8 7 M6.8 5.2 L4.4 7" stroke="#e0e0e0" stroke-width="0.5"/></svg>
<rect x="364" y="497.4" width="19" height="9" fill="#333333"/>
<svg x="369.4" y="497.2" width="7.2" height="6.6" viewBox="0 0 7.2 6.6" overflow="visible"><rect x="0.5" y="0.5" width="6.2" height="5.6" fill="none" stroke="#e0e0e0" stroke-width="0.6"/><path d="M0.5 2.4 H6.7 M0.5 4.2 H6.7 M2.6 0.5 V6.1 M4.6 0.5 V6.1" stroke="#e0e0e0" stroke-width="0.5"/></svg>
<svg x="389.8" y="497.2" width="7.2" height="6.6" viewBox="0 0 7.2 6.6" overflow="visible"><rect x="0.5" y="0.5" width="6.2" height="5.6" fill="none" stroke="#e0e0e0" stroke-width="0.6"/><path d="M2.2 0.5 V6.1 M5 0.5 V6.1" stroke="#e0e0e0" stroke-width="0.5"/></svg>
<svg x="409.4" y="497.2" width="7.2" height="6.6" viewBox="0 0 7.2 6.6" overflow="visible"><rect x="0.5" y="0.5" width="6.2" height="5.6" fill="none" stroke="#e0e0e0" stroke-width="0.6"/><path d="M0.5 3 H3.4 V0.5" fill="none" stroke="#e0e0e0" stroke-width="0.7"/></svg>
<line x1="425.8" y1="500.5" x2="429.4" y2="500.5" stroke="#e0e0e0" stroke-width="0.6" />
<line x1="432.7" y1="500.5" x2="482.2" y2="500.5" stroke="#8a8a8a" stroke-width="0.6" />
<rect x="456.8" y="497.8" width="1.7" height="5.4" fill="#d6d6d6"/>
<path d="M485 500.5 H488.6 M486.8 498.7 V502.3" stroke="#e0e0e0" stroke-width="0.6"/>
</svg>
<span class="t" style="left:26.5px;top:7px;font-size:5.95px;color:#e4e4e4;letter-spacing:-0.04px;">Automatisches Speichern</span>
<span class="t" style="left:142px;top:8px;font-size:5.95px;color:#ffffff;letter-spacing:-0.06px;">appInstallationErrors.csv</span>
<span class="t" style="left:244.7px;top:7px;font-size:5.95px;color:#b4b4b4;letter-spacing:0.03px;">Suchen</span>
<span class="t" style="left:359px;top:7px;font-size:5.95px;color:#e4e4e4;transform:scaleX(0.95);transform-origin:0 50%;">Jannik Reinhard</span>
<span class="t" style="left:408.9px;top:8px;font-size:4.4px;color:#a5dc6a;letter-spacing:0.03px;">JR</span>
<span class="t" style="left:10.5px;top:27px;font-size:5.95px;color:#e4e4e4;letter-spacing:0.28px;">Datei</span>
<span class="t" style="left:36px;top:27px;font-size:5.95px;color:#e4e4e4;letter-spacing:0.36px;">Start</span>
<span class="t" style="left:60px;top:27px;font-size:5.95px;color:#e4e4e4;letter-spacing:0.21px;">Einfügen</span>
<span class="t" style="left:96.5px;top:27px;font-size:5.95px;color:#e4e4e4;letter-spacing:0.16px;">Seitenlayout</span>
<span class="t" style="left:142.8px;top:27px;font-size:5.95px;color:#e4e4e4;letter-spacing:0.23px;">Formeln</span>
<span class="t" style="left:204.8px;top:27px;font-size:5.95px;color:#e4e4e4;letter-spacing:0.38px;">Überprüfen</span>
<span class="t" style="left:249px;top:27px;font-size:5.95px;color:#e4e4e4;letter-spacing:0.15px;">Ansicht</span>
<span class="t" style="left:281.4px;top:27px;font-size:5.95px;color:#e4e4e4;letter-spacing:0.25px;">Automatisieren</span>
<span class="t" style="left:335.8px;top:27px;font-size:5.95px;color:#e4e4e4;letter-spacing:0.15px;">Hilfe</span>
<span class="t" style="left:176.9px;top:27px;font-size:5.95px;color:#ffffff;letter-spacing:0.4px;-webkit-text-stroke:0.22px;">Daten</span>
<span class="t" style="left:413.7px;top:27px;font-size:5.95px;color:#f2f2f2;letter-spacing:0.36px;-webkit-text-stroke:0.22px;">Kommentare</span>
<span class="t" style="left:471.9px;top:27px;font-size:5.95px;color:#0c0c0c;letter-spacing:0.29px;-webkit-text-stroke:0.22px;">Freigeben</span>
<span class="t" style="left:19.7px;top:59px;font-size:5.95px;color:#e4e4e4;transform:scaleX(0.96);transform-origin:0 50%;">Daten</span>
<span class="t" style="left:14.6px;top:67px;font-size:5.95px;color:#e4e4e4;letter-spacing:0.04px;">abrufen</span>
<span class="t" style="left:10.2px;top:79px;font-size:5.95px;color:#e4e4e4;letter-spacing:-0.07px;">Daten abrufen und trans...</span>
<span class="t" style="left:101.2px;top:59px;font-size:5.95px;color:#e4e4e4;letter-spacing:-0.05px;">Alle</span>
<span class="t" style="left:87px;top:67px;font-size:5.95px;color:#e4e4e4;letter-spacing:-0.09px;">aktualisieren</span>
<span class="t" style="left:83.2px;top:79px;font-size:5.95px;color:#e4e4e4;letter-spacing:-0.07px;">Abfragen und Verbin...</span>
<span class="t" style="left:153.3px;top:63px;font-size:5.95px;color:#e4e4e4;letter-spacing:-0.08px;">Aktien (En...</span>
<span class="t" style="left:192.1px;top:63px;font-size:5.95px;color:#e4e4e4;letter-spacing:-0.01px;">Währunge...</span>
<span class="t" style="left:177.4px;top:79px;font-size:5.95px;color:#e4e4e4;letter-spacing:-0.09px;">Datentypen</span>
<span class="t" style="left:246.6px;top:45px;font-size:4.5px;color:#2f8be0;">A</span>
<span class="t" style="left:246.6px;top:49px;font-size:4.5px;color:#d0d0d0;">Z</span>
<span class="t" style="left:246.6px;top:60px;font-size:4.5px;color:#d0d0d0;">Z</span>
<span class="t" style="left:246.6px;top:65px;font-size:4.5px;color:#2f8be0;">A</span>
<span class="t" style="left:265.6px;top:45px;font-size:4.4px;color:#d0d0d0;">Z</span>
<span class="t" style="left:265.5px;top:50px;font-size:4.4px;color:#2f8be0;">A</span>
<span class="t" style="left:272.2px;top:45px;font-size:4.4px;color:#2f8be0;">A</span>
<span class="t" style="left:272.3px;top:50px;font-size:4.4px;color:#d0d0d0;">Z</span>
<span class="t" style="left:259.1px;top:59px;font-size:5.95px;color:#e4e4e4;transform:scaleX(0.95);transform-origin:0 50%;">Sortieren</span>
<span class="t" style="left:292.4px;top:59px;font-size:5.95px;color:#e4e4e4;letter-spacing:-0.06px;">Filtern</span>
<span class="t" style="left:257.6px;top:79px;font-size:5.95px;color:#e4e4e4;letter-spacing:-0.04px;">Sortieren und Filtern</span>
<span class="t" style="left:332.1px;top:58px;font-size:5.95px;color:#e4e4e4;letter-spacing:-0.02px;">Datentools</span>
<span class="t" style="left:370.2px;top:59px;font-size:5.95px;color:#e4e4e4;letter-spacing:0.04px;">Was-wäre-wenn-</span>
<span class="t" style="left:380.3px;top:67px;font-size:5.95px;color:#e4e4e4;letter-spacing:-0.08px;">Analyse</span>
<span class="t" style="left:419px;top:59px;font-size:5.95px;color:#e4e4e4;letter-spacing:0.01px;">Prognoseblatt</span>
<span class="t" style="left:401px;top:79px;font-size:5.95px;color:#e4e4e4;transform:scaleX(0.93);transform-origin:0 50%;">Prognose</span>
<span class="t" style="left:466px;top:58px;font-size:5.95px;color:#e4e4e4;transform:scaleX(0.96);transform-origin:0 50%;">Gliederung</span>
<span class="t" style="left:9.9px;top:95px;font-size:6px;color:#dcdcdc;letter-spacing:0.01px;text-shadow:none;">A25</span>
<span class="t" style="left:94.4px;top:95px;font-size:7.6px;color:#e2e2e2;font-family:'Liberation Serif',serif;font-style:italic;">f</span>
<span class="t" style="left:97.4px;top:96px;font-size:5.4px;color:#e2e2e2;font-family:'Liberation Serif',serif;font-style:italic;">x</span>
<span class="t" style="left:34.29px;top:110px;font-size:6.3px;color:#f0f0f0;text-shadow:none;">A</span>
<span class="t" style="left:118.46px;top:110px;font-size:6.3px;color:#bcbcbc;text-shadow:none;">B</span>
<span class="t" style="left:205.18px;top:110px;font-size:6.3px;color:#bcbcbc;text-shadow:none;">C</span>
<span class="t" style="left:263.23px;top:110px;font-size:6.3px;color:#bcbcbc;text-shadow:none;">D</span>
<span class="t" style="left:351.11px;top:110px;font-size:6.3px;color:#bcbcbc;text-shadow:none;">E</span>
<span class="t" style="left:424.78px;top:110px;font-size:6.3px;color:#bcbcbc;text-shadow:none;">F</span>
<span class="t" style="left:464.14px;top:110px;font-size:6.3px;color:#bcbcbc;text-shadow:none;">G</span>
<span class="t" style="left:504.5px;top:110px;font-size:6.3px;color:#bcbcbc;width:3.1px;overflow:hidden;text-shadow:none;">H</span>
<span class="t" style="left:6.82px;top:120px;font-size:6.4px;color:#c6c6c6;letter-spacing:0.1px;text-shadow:none;">1</span>
<span class="t" style="left:6.82px;top:130px;font-size:6.4px;color:#c6c6c6;letter-spacing:0.1px;text-shadow:none;">2</span>
<span class="t" style="left:6.82px;top:140px;font-size:6.4px;color:#c6c6c6;letter-spacing:0.1px;text-shadow:none;">3</span>
<span class="t" style="left:6.82px;top:150px;font-size:6.4px;color:#c6c6c6;letter-spacing:0.1px;text-shadow:none;">4</span>
<span class="t" style="left:6.82px;top:160px;font-size:6.4px;color:#c6c6c6;letter-spacing:0.1px;text-shadow:none;">5</span>
<span class="t" style="left:6.82px;top:170px;font-size:6.4px;color:#c6c6c6;letter-spacing:0.1px;text-shadow:none;">6</span>
<span class="t" style="left:6.82px;top:180px;font-size:6.4px;color:#c6c6c6;letter-spacing:0.1px;text-shadow:none;">7</span>
<span class="t" style="left:6.82px;top:190px;font-size:6.4px;color:#c6c6c6;letter-spacing:0.1px;text-shadow:none;">8</span>
<span class="t" style="left:6.82px;top:200px;font-size:6.4px;color:#c6c6c6;letter-spacing:0.1px;text-shadow:none;">9</span>
<span class="t" style="left:5px;top:210px;font-size:6.4px;color:#c6c6c6;letter-spacing:0.1px;text-shadow:none;">10</span>
<span class="t" style="left:5.22px;top:220px;font-size:6.4px;color:#c6c6c6;letter-spacing:0.1px;text-shadow:none;">11</span>
<span class="t" style="left:5px;top:230px;font-size:6.4px;color:#c6c6c6;letter-spacing:0.1px;text-shadow:none;">12</span>
<span class="t" style="left:5px;top:240px;font-size:6.4px;color:#c6c6c6;letter-spacing:0.1px;text-shadow:none;">13</span>
<span class="t" style="left:5px;top:250px;font-size:6.4px;color:#c6c6c6;letter-spacing:0.1px;text-shadow:none;">14</span>
<span class="t" style="left:5px;top:260px;font-size:6.4px;color:#c6c6c6;letter-spacing:0.1px;text-shadow:none;">15</span>
<span class="t" style="left:5px;top:269px;font-size:6.4px;color:#c6c6c6;letter-spacing:0.1px;text-shadow:none;">16</span>
<span class="t" style="left:5px;top:279px;font-size:6.4px;color:#c6c6c6;letter-spacing:0.1px;text-shadow:none;">17</span>
<span class="t" style="left:5px;top:289px;font-size:6.4px;color:#c6c6c6;letter-spacing:0.1px;text-shadow:none;">18</span>
<span class="t" style="left:5px;top:299px;font-size:6.4px;color:#c6c6c6;letter-spacing:0.1px;text-shadow:none;">19</span>
<span class="t" style="left:5px;top:309px;font-size:6.4px;color:#c6c6c6;letter-spacing:0.1px;text-shadow:none;">20</span>
<span class="t" style="left:5px;top:319px;font-size:6.4px;color:#c6c6c6;letter-spacing:0.1px;text-shadow:none;">21</span>
<span class="t" style="left:5px;top:329px;font-size:6.4px;color:#c6c6c6;letter-spacing:0.1px;text-shadow:none;">22</span>
<span class="t" style="left:5px;top:339px;font-size:6.4px;color:#c6c6c6;letter-spacing:0.1px;text-shadow:none;">23</span>
<span class="t" style="left:5px;top:349px;font-size:6.4px;color:#c6c6c6;letter-spacing:0.1px;text-shadow:none;">24</span>
<span class="t" style="left:5px;top:359px;font-size:6.4px;color:#f0f0f0;letter-spacing:0.1px;text-shadow:none;">25</span>
<span class="t" style="left:5px;top:369px;font-size:6.4px;color:#c6c6c6;letter-spacing:0.1px;text-shadow:none;">26</span>
<span class="t" style="left:5px;top:379px;font-size:6.4px;color:#c6c6c6;letter-spacing:0.1px;text-shadow:none;">27</span>
<span class="t" style="left:5px;top:389px;font-size:6.4px;color:#c6c6c6;letter-spacing:0.1px;text-shadow:none;">28</span>
<span class="t" style="left:5px;top:399px;font-size:6.4px;color:#c6c6c6;letter-spacing:0.1px;text-shadow:none;">29</span>
<span class="t" style="left:5px;top:409px;font-size:6.4px;color:#c6c6c6;letter-spacing:0.1px;text-shadow:none;">30</span>
<span class="t" style="left:5px;top:419px;font-size:6.4px;color:#c6c6c6;letter-spacing:0.1px;text-shadow:none;">31</span>
<span class="t" style="left:5px;top:429px;font-size:6.4px;color:#c6c6c6;letter-spacing:0.1px;text-shadow:none;">32</span>
<span class="t" style="left:5px;top:439px;font-size:6.4px;color:#c6c6c6;letter-spacing:0.1px;text-shadow:none;">33</span>
<span class="t" style="left:5px;top:449px;font-size:6.4px;color:#c6c6c6;letter-spacing:0.1px;text-shadow:none;">34</span>
<span class="t" style="left:5px;top:459px;font-size:6.4px;color:#c6c6c6;letter-spacing:0.1px;text-shadow:none;">35</span>
<span class="t" style="left:5px;top:469px;font-size:6.4px;color:#c6c6c6;letter-spacing:0.1px;text-shadow:none;">36</span>
<span class="t" style="left:16.7px;top:120px;font-size:6.55px;color:#262626;letter-spacing:0.24px;">deviceName</span>
<span class="t" style="left:58.8px;top:120px;font-size:6.55px;color:#262626;letter-spacing:0.19px;">userPrincipalName</span>
<span class="t" style="left:184.7px;top:120px;font-size:6.55px;color:#262626;letter-spacing:0.23px;">installState</span>
<span class="t" style="left:233.1px;top:120px;font-size:6.55px;color:#262626;letter-spacing:0.06px;">lastSyncDateTime</span>
<span class="t" style="left:301.2px;top:120px;font-size:6.55px;color:#262626;letter-spacing:0.1px;">AppName</span>
<span class="t" style="left:16.7px;top:130px;font-size:6.55px;color:#262626;transform:scaleX(0.87);transform-origin:0 50%;">OFFICEPC</span>
<span class="t" style="left:58.8px;top:130px;font-size:6.55px;color:#262626;transform:scaleX(0.97);transform-origin:0 50%;">JannikR@</span>
<span class="t" style="left:184.7px;top:130px;font-size:6.55px;color:#262626;letter-spacing:0.23px;">error</span>
<span class="t" style="left:233.1px;top:130px;font-size:6.55px;color:#262626;letter-spacing:-0.17px;">2022-12-29T14:36:33Z</span>
<span class="t" style="left:301.2px;top:130px;font-size:6.55px;color:#262626;letter-spacing:0.1px;">Bitwarden</span>
<span class="t" style="left:16.7px;top:140px;font-size:6.55px;color:#262626;transform:scaleX(0.87);transform-origin:0 50%;">OFFICEPC</span>
<span class="t" style="left:58.8px;top:140px;font-size:6.55px;color:#262626;transform:scaleX(0.97);transform-origin:0 50%;">JannikR@</span>
<span class="t" style="left:184.7px;top:140px;font-size:6.55px;color:#262626;letter-spacing:0.23px;">error</span>
<span class="t" style="left:233.1px;top:140px;font-size:6.55px;color:#262626;letter-spacing:-0.17px;">2022-07-16T14:37:21Z</span>
<span class="t" style="left:301.2px;top:140px;font-size:6.55px;color:#262626;letter-spacing:0.1px;">CMTrace</span>
<span class="t" style="left:16.7px;top:150px;font-size:6.55px;color:#262626;letter-spacing:-0.24px;">504592093278443</span>
<span class="t" style="left:184.7px;top:150px;font-size:6.55px;color:#262626;letter-spacing:0.23px;">error</span>
<span class="t" style="left:233.1px;top:150px;font-size:6.55px;color:#262626;letter-spacing:-0.17px;">2022-06-13T15:03:48Z</span>
<span class="t" style="left:301.2px;top:150px;font-size:6.55px;color:#262626;letter-spacing:0.1px;">CMTrace</span>
<span class="t" style="left:16.7px;top:160px;font-size:6.55px;color:#262626;letter-spacing:-0.24px;width:40.8px;overflow:hidden;">504592093278443</span>
<span class="t" style="left:58.8px;top:160px;font-size:6.55px;color:#262626;transform:scaleX(0.98);transform-origin:0 50%;">TestUser@</span>
<span class="t" style="left:184.7px;top:160px;font-size:6.55px;color:#262626;letter-spacing:0.23px;">error</span>
<span class="t" style="left:233.1px;top:160px;font-size:6.55px;color:#262626;letter-spacing:-0.17px;">2022-05-24T17:52:50Z</span>
<span class="t" style="left:301.2px;top:160px;font-size:6.55px;color:#262626;letter-spacing:0.1px;">CMTrace</span>
<span class="t" style="left:16.7px;top:170px;font-size:6.55px;color:#262626;transform:scaleX(0.87);transform-origin:0 50%;">OFFICEPC</span>
<span class="t" style="left:58.8px;top:170px;font-size:6.55px;color:#262626;transform:scaleX(0.97);transform-origin:0 50%;">JannikR@</span>
<span class="t" style="left:184.7px;top:170px;font-size:6.55px;color:#262626;letter-spacing:0.23px;">error</span>
<span class="t" style="left:233.1px;top:170px;font-size:6.55px;color:#262626;letter-spacing:-0.17px;">2022-12-29T14:36:33Z</span>
<span class="t" style="left:301.2px;top:170px;font-size:6.55px;color:#262626;letter-spacing:0.1px;">Company Portal</span>
<span class="t" style="left:16.7px;top:179px;font-size:6.55px;color:#262626;letter-spacing:-0.24px;width:40.8px;overflow:hidden;">504592093278443</span>
<span class="t" style="left:58.8px;top:179px;font-size:6.55px;color:#262626;transform:scaleX(0.98);transform-origin:0 50%;">TestUser@</span>
<span class="t" style="left:184.7px;top:179px;font-size:6.55px;color:#262626;letter-spacing:0.23px;">error</span>
<span class="t" style="left:233.1px;top:179px;font-size:6.55px;color:#262626;letter-spacing:-0.17px;">2022-05-25T11:36:21Z</span>
<span class="t" style="left:301.2px;top:179px;font-size:6.55px;color:#262626;letter-spacing:0.1px;">Company Portal</span>
<span class="t" style="left:16.7px;top:189px;font-size:6.55px;color:#262626;transform:scaleX(0.87);transform-origin:0 50%;">OFFICEPC</span>
<span class="t" style="left:58.8px;top:189px;font-size:6.55px;color:#262626;transform:scaleX(0.97);transform-origin:0 50%;">JannikR@</span>
<span class="t" style="left:184.7px;top:189px;font-size:6.55px;color:#262626;letter-spacing:0.23px;">error</span>
<span class="t" style="left:233.1px;top:189px;font-size:6.55px;color:#262626;letter-spacing:-0.17px;">2022-07-23T09:08:39Z</span>
<span class="t" style="left:301.2px;top:189px;font-size:6.55px;color:#262626;letter-spacing:0.1px;">Company Portal System Tray Tool</span>
<span class="t" style="left:16.7px;top:199px;font-size:6.55px;color:#262626;letter-spacing:-0.24px;">504592093278443</span>
<span class="t" style="left:184.7px;top:199px;font-size:6.55px;color:#262626;letter-spacing:0.23px;">pendingInstall</span>
<span class="t" style="left:233.1px;top:199px;font-size:6.55px;color:#262626;letter-spacing:-0.17px;">2022-07-18T13:03:54Z</span>
<span class="t" style="left:301.2px;top:199px;font-size:6.55px;color:#262626;letter-spacing:0.1px;">Company Portal System Tray Tool</span>
<span class="t" style="left:16.7px;top:209px;font-size:6.55px;color:#262626;transform:scaleX(0.87);transform-origin:0 50%;">OFFICEPC</span>
<span class="t" style="left:58.8px;top:209px;font-size:6.55px;color:#262626;transform:scaleX(0.97);transform-origin:0 50%;">JannikR@</span>
<span class="t" style="left:184.7px;top:209px;font-size:6.55px;color:#262626;letter-spacing:0.23px;">notApplicable</span>
<span class="t" style="left:233.1px;top:209px;font-size:6.55px;color:#262626;letter-spacing:-0.17px;">2023-02-04T07:52:08Z</span>
<span class="t" style="left:301.2px;top:209px;font-size:6.55px;color:#262626;letter-spacing:0.1px;">Greenshot</span>
<span class="t" style="left:16.7px;top:219px;font-size:6.55px;color:#262626;transform:scaleX(0.87);transform-origin:0 50%;">OFFICEPC</span>
<span class="t" style="left:58.8px;top:219px;font-size:6.55px;color:#262626;transform:scaleX(0.97);transform-origin:0 50%;">JannikR@</span>
<span class="t" style="left:184.7px;top:219px;font-size:6.55px;color:#262626;letter-spacing:0.23px;">error</span>
<span class="t" style="left:233.1px;top:219px;font-size:6.55px;color:#262626;letter-spacing:-0.17px;">2023-02-04T07:52:08Z</span>
<span class="t" style="left:301.2px;top:219px;font-size:6.55px;color:#262626;letter-spacing:0.1px;">Microsoft Edge for Windows 10</span>
<span class="t" style="left:16.7px;top:229px;font-size:6.55px;color:#262626;letter-spacing:-0.24px;width:40.8px;overflow:hidden;">504592093278443</span>
<span class="t" style="left:58.8px;top:229px;font-size:6.55px;color:#262626;transform:scaleX(0.98);transform-origin:0 50%;">TestUser@</span>
<span class="t" style="left:184.7px;top:229px;font-size:6.55px;color:#262626;letter-spacing:0.23px;">error</span>
<span class="t" style="left:233.1px;top:229px;font-size:6.55px;color:#262626;letter-spacing:-0.17px;">2022-05-24T17:52:50Z</span>
<span class="t" style="left:301.2px;top:229px;font-size:6.55px;color:#262626;letter-spacing:0.1px;">Microsoft Edge for Windows 10</span>
<span class="t" style="left:16.7px;top:239px;font-size:6.55px;color:#262626;transform:scaleX(0.87);transform-origin:0 50%;">OFFICEPC</span>
<span class="t" style="left:58.8px;top:239px;font-size:6.55px;color:#262626;transform:scaleX(0.97);transform-origin:0 50%;">JannikR@</span>
<span class="t" style="left:184.7px;top:239px;font-size:6.55px;color:#262626;letter-spacing:0.23px;">error</span>
<span class="t" style="left:233.1px;top:239px;font-size:6.55px;color:#262626;letter-spacing:-0.17px;">2022-08-02T14:04:34Z</span>
<span class="t" style="left:301.2px;top:239px;font-size:6.55px;color:#262626;letter-spacing:0.1px;">Notion</span>
<span class="t" style="left:16.7px;top:249px;font-size:6.55px;color:#262626;transform:scaleX(0.87);transform-origin:0 50%;">OFFICEPC</span>
<span class="t" style="left:58.8px;top:249px;font-size:6.55px;color:#262626;transform:scaleX(0.97);transform-origin:0 50%;">JannikR@</span>
<span class="t" style="left:184.7px;top:249px;font-size:6.55px;color:#262626;letter-spacing:0.23px;">error</span>
<span class="t" style="left:233.1px;top:249px;font-size:6.55px;color:#262626;letter-spacing:-0.17px;">2022-12-26T15:03:53Z</span>
<span class="t" style="left:301.2px;top:249px;font-size:6.55px;color:#262626;letter-spacing:0.1px;">OneNote for Windows 10</span>
<span class="t" style="left:16.7px;top:259px;font-size:6.55px;color:#262626;letter-spacing:-0.24px;width:40.8px;overflow:hidden;">504592093278443</span>
<span class="t" style="left:58.8px;top:259px;font-size:6.55px;color:#262626;transform:scaleX(0.98);transform-origin:0 50%;">TestUser@</span>
<span class="t" style="left:184.7px;top:259px;font-size:6.55px;color:#262626;letter-spacing:0.23px;">error</span>
<span class="t" style="left:233.1px;top:259px;font-size:6.55px;color:#262626;letter-spacing:-0.17px;">2022-05-25T17:49:34Z</span>
<span class="t" style="left:301.2px;top:259px;font-size:6.55px;color:#262626;letter-spacing:0.1px;">OneNote for Windows 10</span>
<span class="t" style="left:16.7px;top:269px;font-size:6.55px;color:#262626;transform:scaleX(0.87);transform-origin:0 50%;">OFFICEPC</span>
<span class="t" style="left:58.8px;top:269px;font-size:6.55px;color:#262626;transform:scaleX(0.97);transform-origin:0 50%;">JannikR@</span>
<span class="t" style="left:184.7px;top:269px;font-size:6.55px;color:#262626;letter-spacing:0.23px;">error</span>
<span class="t" style="left:233.1px;top:269px;font-size:6.55px;color:#262626;letter-spacing:-0.17px;">2022-12-26T15:03:53Z</span>
<span class="t" style="left:301.2px;top:269px;font-size:6.55px;color:#262626;letter-spacing:0.1px;">Quick Assist</span>
<span class="t" style="left:16.7px;top:279px;font-size:6.55px;color:#262626;letter-spacing:-0.24px;width:40.8px;overflow:hidden;">504592093278443</span>
<span class="t" style="left:58.8px;top:279px;font-size:6.55px;color:#262626;transform:scaleX(0.98);transform-origin:0 50%;">TestUser@</span>
<span class="t" style="left:184.7px;top:279px;font-size:6.55px;color:#262626;letter-spacing:0.23px;">error</span>
<span class="t" style="left:233.1px;top:279px;font-size:6.55px;color:#262626;letter-spacing:-0.17px;">2022-06-16T12:34:26Z</span>
<span class="t" style="left:301.2px;top:279px;font-size:6.55px;color:#262626;letter-spacing:0.1px;">Quick Assist</span>
<span class="t" style="left:16.7px;top:289px;font-size:6.55px;color:#262626;transform:scaleX(0.87);transform-origin:0 50%;">OFFICEPC</span>
<span class="t" style="left:58.8px;top:289px;font-size:6.55px;color:#262626;transform:scaleX(0.97);transform-origin:0 50%;">JannikR@</span>
<span class="t" style="left:184.7px;top:289px;font-size:6.55px;color:#262626;letter-spacing:0.23px;">error</span>
<span class="t" style="left:233.1px;top:289px;font-size:6.55px;color:#262626;letter-spacing:-0.17px;">2022-12-29T14:36:33Z</span>
<span class="t" style="left:301.2px;top:289px;font-size:6.55px;color:#262626;letter-spacing:0.1px;">Spotify - Music and Podcasts</span>
<span class="t" style="left:16.7px;top:299px;font-size:6.55px;color:#262626;letter-spacing:-0.24px;width:40.8px;overflow:hidden;">504592093278443</span>
<span class="t" style="left:58.8px;top:299px;font-size:6.55px;color:#262626;transform:scaleX(0.98);transform-origin:0 50%;">TestUser@</span>
<span class="t" style="left:184.7px;top:299px;font-size:6.55px;color:#262626;letter-spacing:0.23px;">error</span>
<span class="t" style="left:233.1px;top:299px;font-size:6.55px;color:#262626;letter-spacing:-0.17px;">2022-06-11T14:07:33Z</span>
<span class="t" style="left:301.2px;top:299px;font-size:6.55px;color:#262626;letter-spacing:0.1px;">Spotify - Music and Podcasts</span>
<span class="t" style="left:16.7px;top:309px;font-size:6.55px;color:#262626;transform:scaleX(0.87);transform-origin:0 50%;">OFFICEPC</span>
<span class="t" style="left:58.8px;top:309px;font-size:6.55px;color:#262626;transform:scaleX(0.97);transform-origin:0 50%;">JannikR@</span>
<span class="t" style="left:184.7px;top:309px;font-size:6.55px;color:#262626;letter-spacing:0.23px;">error</span>
<span class="t" style="left:233.1px;top:309px;font-size:6.55px;color:#262626;letter-spacing:-0.17px;">2022-07-08T19:12:08Z</span>
<span class="t" style="left:301.2px;top:309px;font-size:6.55px;color:#262626;letter-spacing:0.1px;">Web Company Portal</span>
<span class="t" style="left:16.7px;top:319px;font-size:6.55px;color:#262626;letter-spacing:-0.24px;width:40.8px;overflow:hidden;">504592093278443</span>
<span class="t" style="left:58.8px;top:319px;font-size:6.55px;color:#262626;transform:scaleX(0.98);transform-origin:0 50%;">TestUser@</span>
<span class="t" style="left:184.7px;top:319px;font-size:6.55px;color:#262626;letter-spacing:0.23px;">error</span>
<span class="t" style="left:233.1px;top:319px;font-size:6.55px;color:#262626;letter-spacing:-0.17px;">2022-06-12T07:32:50Z</span>
<span class="t" style="left:301.2px;top:319px;font-size:6.55px;color:#262626;letter-spacing:0.1px;">Web Company Portal</span>
<span class="t" style="left:16.7px;top:329px;font-size:6.55px;color:#262626;transform:scaleX(0.87);transform-origin:0 50%;">OFFICEPC</span>
<span class="t" style="left:58.8px;top:329px;font-size:6.55px;color:#262626;transform:scaleX(0.97);transform-origin:0 50%;">JannikR@</span>
<span class="t" style="left:184.7px;top:329px;font-size:6.55px;color:#262626;letter-spacing:0.23px;">error</span>
<span class="t" style="left:233.1px;top:329px;font-size:6.55px;color:#262626;letter-spacing:-0.17px;">2022-09-24T09:33:50Z</span>
<span class="t" style="left:301.2px;top:329px;font-size:6.55px;color:#262626;letter-spacing:0.1px;">Web Company Portal</span>
<span class="t" style="left:16.7px;top:339px;font-size:6.55px;color:#262626;transform:scaleX(0.87);transform-origin:0 50%;">OFFICEPC</span>
<span class="t" style="left:58.8px;top:339px;font-size:6.55px;color:#262626;transform:scaleX(0.97);transform-origin:0 50%;">JannikR@</span>
<span class="t" style="left:184.7px;top:339px;font-size:6.55px;color:#262626;letter-spacing:0.23px;">error</span>
<span class="t" style="left:233.1px;top:339px;font-size:6.55px;color:#262626;letter-spacing:-0.17px;">2022-12-29T14:36:33Z</span>
<span class="t" style="left:301.2px;top:339px;font-size:6.55px;color:#262626;letter-spacing:0.1px;">Windows Terminal</span>
<span class="t" style="left:16.7px;top:349px;font-size:6.55px;color:#262626;letter-spacing:-0.24px;width:40.8px;overflow:hidden;">504592093278443</span>
<span class="t" style="left:58.8px;top:349px;font-size:6.55px;color:#262626;transform:scaleX(0.98);transform-origin:0 50%;">TestUser@</span>
<span class="t" style="left:184.7px;top:349px;font-size:6.55px;color:#262626;letter-spacing:0.23px;">error</span>
<span class="t" style="left:233.1px;top:349px;font-size:6.55px;color:#262626;letter-spacing:-0.17px;">2022-06-11T09:51:25Z</span>
<span class="t" style="left:301.2px;top:349px;font-size:6.55px;color:#262626;letter-spacing:0.1px;">Windows Terminal</span>
<span class="t" style="left:58.4px;top:481px;font-size:5.95px;color:#1e7145;letter-spacing:0.47px;-webkit-text-stroke:0.22px;">appInstallationErrors</span>
<span class="t" style="left:6.9px;top:495px;font-size:5.6px;color:#e0e0e0;transform:scaleX(0.95);transform-origin:0 50%;">Bereit</span>
<span class="t" style="left:38.6px;top:495px;font-size:5.6px;color:#e0e0e0;letter-spacing:0.14px;">Bedienungshilfen: nicht verfügbar</span>
<span class="t" style="left:496px;top:495px;font-size:5.4px;color:#e0e0e0;transform:scaleX(0.93);transform-origin:0 50%;">100%</span>
</div>
</body></html>
